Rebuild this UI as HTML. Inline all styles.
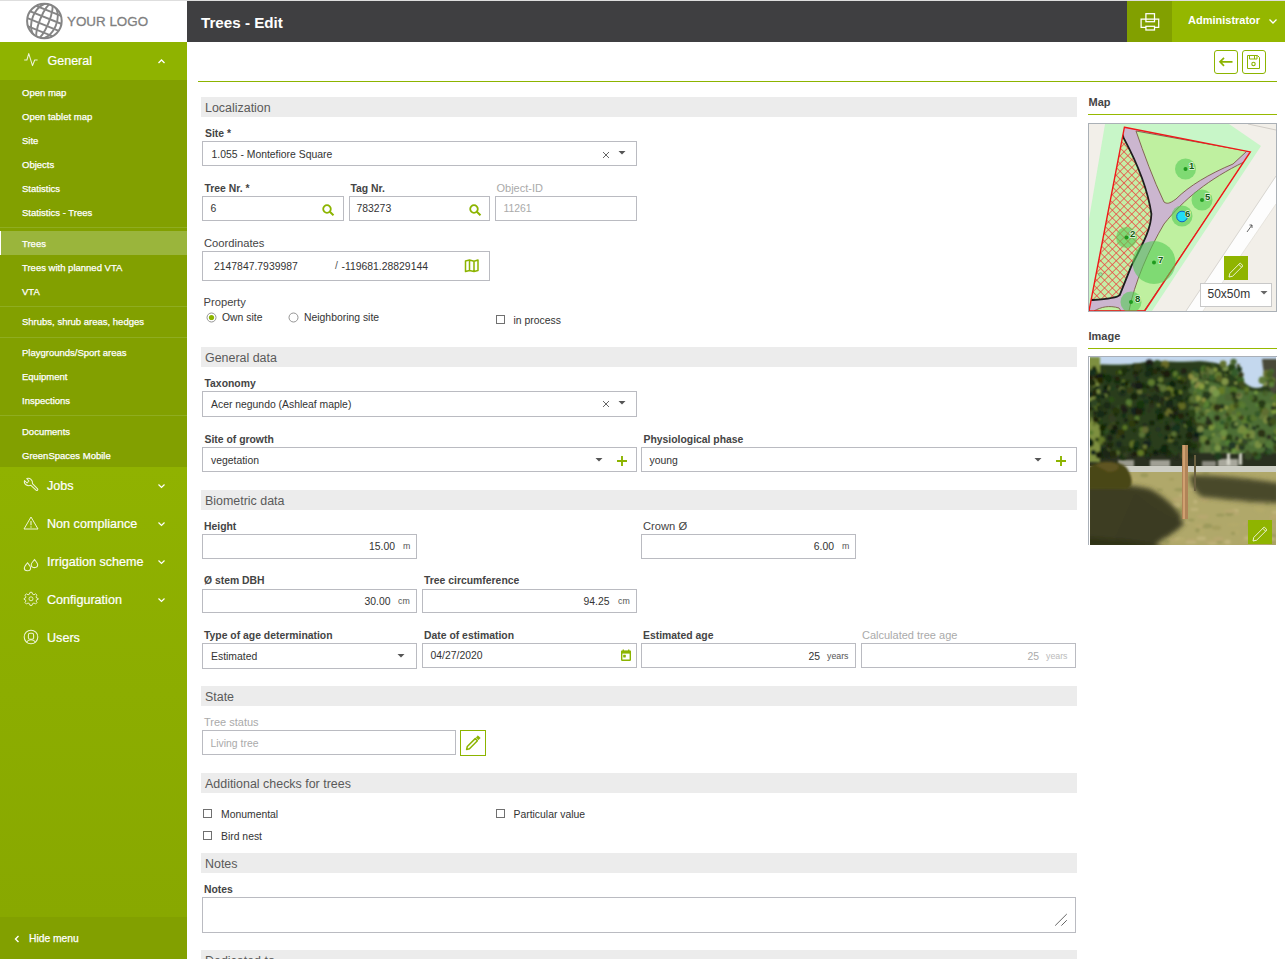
<!DOCTYPE html><html><head><meta charset="utf-8"><style>
html,body{margin:0;padding:0;}
body{width:1285px;height:959px;overflow:hidden;position:relative;background:#fff;font-family:"Liberation Sans", sans-serif;}
.t{position:absolute;white-space:nowrap;line-height:1;font-family:"Liberation Sans", sans-serif;}
.r{position:absolute;}
svg{position:absolute;}
</style></head><body>
<div class="r" style="left:0px;top:0px;width:1285px;height:1px;background:#dedede;"></div>
<div class="r" style="left:0px;top:1px;width:187px;height:41px;background:#fff;"></div>
<svg style="left:25px;top:2px" width="39" height="39" viewBox="0 0 39 39">
<defs><clipPath id="gc"><circle cx="19.4" cy="19" r="17.6"/></clipPath></defs>
<circle cx="19.4" cy="19" r="17.3" fill="none" stroke="#858585" stroke-width="2"/>
<g clip-path="url(#gc)" stroke="#858585" stroke-width="1.9" fill="none" transform="rotate(22 19.4 19)">
<ellipse cx="19.4" cy="19" rx="4.6" ry="18.5"/>
<ellipse cx="19.4" cy="19" rx="12.3" ry="18.5"/>
<line x1="0" y1="8" x2="39" y2="8"/>
<line x1="0" y1="15.3" x2="39" y2="15.3"/>
<line x1="0" y1="22.7" x2="39" y2="22.7"/>
<line x1="0" y1="30" x2="39" y2="30"/>
</g></svg>
<div class="t" style="left:67px;top:15px;font-size:13.4px;font-weight:400;color:#7f7f7f;-webkit-text-stroke:0.3px #7f7f7f;">YOUR LOGO</div>
<div class="r" style="left:0px;top:42px;width:187px;height:38px;background:#8fb300;"></div>
<div class="r" style="left:0px;top:80px;width:187px;height:387px;background:#82a000;"></div>
<div class="r" style="left:0px;top:467px;width:187px;height:450px;background:linear-gradient(#90b200,#88a800);"></div>
<div class="r" style="left:0px;top:917px;width:187px;height:42px;background:#82a000;"></div>
<svg style="left:20px;top:50px" width="20" height="20" viewBox="0 0 20 20"><polyline points="4.2,10 6.9,10 8.75,3.6 12.5,15.6 14.7,10 17.6,10" fill="none" stroke="#eef5d8" stroke-width="1.05" stroke-linejoin="round"/></svg>
<div class="t" style="left:47.5px;top:54.5px;font-size:12.5px;font-weight:400;color:#fff;-webkit-text-stroke:0.2px #fff;">General</div>
<svg style="left:157px;top:57px" width="9" height="8" viewBox="0 0 9 8"><polyline points="1.5,6 4.5,3 7.5,6" fill="none" stroke="#fff" stroke-width="1.3"/></svg>
<div class="r" style="left:0px;top:227px;width:187px;height:1px;background:#8fad20;"></div>
<div class="r" style="left:0px;top:306px;width:187px;height:1px;background:#8fad20;"></div>
<div class="r" style="left:0px;top:337px;width:187px;height:1px;background:#8fad20;"></div>
<div class="r" style="left:0px;top:415px;width:187px;height:1px;background:#8fad20;"></div>
<div class="r" style="left:0px;top:231px;width:187px;height:24px;background:#9ab53c;"></div>
<div class="r" style="left:0px;top:231px;width:1px;height:24px;background:#fff;"></div>
<div class="t" style="left:22px;top:88px;font-size:9.5px;font-weight:400;color:#fff;-webkit-text-stroke:0.25px #fff;">Open map</div>
<div class="t" style="left:22px;top:112px;font-size:9.5px;font-weight:400;color:#fff;-webkit-text-stroke:0.25px #fff;">Open tablet map</div>
<div class="t" style="left:22px;top:136px;font-size:9.5px;font-weight:400;color:#fff;-webkit-text-stroke:0.25px #fff;">Site</div>
<div class="t" style="left:22px;top:160px;font-size:9.5px;font-weight:400;color:#fff;-webkit-text-stroke:0.25px #fff;">Objects</div>
<div class="t" style="left:22px;top:184px;font-size:9.5px;font-weight:400;color:#fff;-webkit-text-stroke:0.25px #fff;">Statistics</div>
<div class="t" style="left:22px;top:208px;font-size:9.5px;font-weight:400;color:#fff;-webkit-text-stroke:0.25px #fff;">Statistics - Trees</div>
<div class="t" style="left:22px;top:239px;font-size:9.5px;font-weight:400;color:#fff;-webkit-text-stroke:0.25px #fff;">Trees</div>
<div class="t" style="left:22px;top:263px;font-size:9.5px;font-weight:400;color:#fff;-webkit-text-stroke:0.25px #fff;">Trees with planned VTA</div>
<div class="t" style="left:22px;top:287px;font-size:9.5px;font-weight:400;color:#fff;-webkit-text-stroke:0.25px #fff;">VTA</div>
<div class="t" style="left:22px;top:317px;font-size:9.5px;font-weight:400;color:#fff;-webkit-text-stroke:0.25px #fff;">Shrubs, shrub areas, hedges</div>
<div class="t" style="left:22px;top:348px;font-size:9.5px;font-weight:400;color:#fff;-webkit-text-stroke:0.25px #fff;">Playgrounds/Sport areas</div>
<div class="t" style="left:22px;top:372px;font-size:9.5px;font-weight:400;color:#fff;-webkit-text-stroke:0.25px #fff;">Equipment</div>
<div class="t" style="left:22px;top:396px;font-size:9.5px;font-weight:400;color:#fff;-webkit-text-stroke:0.25px #fff;">Inspections</div>
<div class="t" style="left:22px;top:427px;font-size:9.5px;font-weight:400;color:#fff;-webkit-text-stroke:0.25px #fff;">Documents</div>
<div class="t" style="left:22px;top:451px;font-size:9.5px;font-weight:400;color:#fff;-webkit-text-stroke:0.25px #fff;">GreenSpaces Mobile</div>
<svg style="left:20px;top:474px" width="24" height="24" viewBox="0 0 24 24"><path d="M4.5,6.5 L7,9 L9,7 L6.8,4.6 C9.8,3.6 13,6 12.5,9.6 L17.6,14.8 C18.3,15.6 17.2,17 16.3,16.4 L10.9,11.3 C7.2,12.6 3.6,10.2 4.5,6.5 Z" fill="none" stroke="#eef5d8" stroke-width="1.05" stroke-linejoin="round"/></svg>
<div class="t" style="left:47px;top:480px;font-size:12.6px;font-weight:400;color:#fff;-webkit-text-stroke:0.2px #fff;">Jobs</div>
<svg style="left:157px;top:482px" width="9" height="8" viewBox="0 0 9 8"><polyline points="1.5,2.5 4.5,5.5 7.5,2.5" fill="none" stroke="#fff" stroke-width="1.2"/></svg>
<svg style="left:20px;top:512px" width="24" height="24" viewBox="0 0 24 24"><path d="M11,5 L18,17 L4,17 Z" fill="none" stroke="#eef5d8" stroke-width="1" stroke-linejoin="round"/><line x1="11" y1="9" x2="11" y2="13.2" stroke="#eef5d8" stroke-width="1.1"/><circle cx="11" cy="15" r="0.65" fill="#eef5d8"/></svg>
<div class="t" style="left:47px;top:518px;font-size:12.6px;font-weight:400;color:#fff;-webkit-text-stroke:0.2px #fff;">Non compliance</div>
<svg style="left:157px;top:520px" width="9" height="8" viewBox="0 0 9 8"><polyline points="1.5,2.5 4.5,5.5 7.5,2.5" fill="none" stroke="#fff" stroke-width="1.2"/></svg>
<svg style="left:20px;top:550px" width="24" height="24" viewBox="0 0 24 24"><path d="M7.5,12.8 C6.3,14.6 4.3,16.2 4.3,18 C4.3,19.8 5.8,20.8 7.4,20.8 C9.1,20.8 10.6,19.8 10.6,18 C10.6,16.2 8.8,14.6 7.5,12.8 Z" fill="none" stroke="#eef5d8" stroke-width="1.05"/><path d="M14.5,9.6 C13.3,11.4 11.2,13 11.2,14.8 C11.2,16.6 12.8,17.6 14.4,17.6 C16.1,17.6 17.7,16.6 17.7,14.8 C17.7,13 15.8,11.4 14.5,9.6 Z" fill="none" stroke="#eef5d8" stroke-width="1.05"/></svg>
<div class="t" style="left:47px;top:556px;font-size:12.6px;font-weight:400;color:#fff;-webkit-text-stroke:0.2px #fff;">Irrigation scheme</div>
<svg style="left:157px;top:558px" width="9" height="8" viewBox="0 0 9 8"><polyline points="1.5,2.5 4.5,5.5 7.5,2.5" fill="none" stroke="#fff" stroke-width="1.2"/></svg>
<svg style="left:20px;top:588px" width="24" height="24" viewBox="0 0 24 24"><circle cx="11" cy="10.8" r="2" fill="none" stroke="#eef5d8" stroke-width="0.9"/><path d="M10,4.3 L12,4.3 L12.6,6.2 L14,6.8 L15.6,5.8 L17,7.2 L16.1,8.8 L16.6,10 L18.2,10.5 L18.2,11.3 L16.6,11.8 L16.1,13 L17,14.6 L15.6,16 L14,15 L12.6,15.6 L12,17.4 L10,17.4 L9.4,15.6 L8,15 L6.4,16 L5,14.6 L5.9,13 L5.4,11.8 L4,11.3 L4,10.5 L5.4,10 L5.9,8.8 L5,7.2 L6.4,5.8 L8,6.8 L9.4,6.2 Z" fill="none" stroke="#eef5d8" stroke-width="0.9" stroke-linejoin="round"/></svg>
<div class="t" style="left:47px;top:594px;font-size:12.6px;font-weight:400;color:#fff;-webkit-text-stroke:0.2px #fff;">Configuration</div>
<svg style="left:157px;top:596px" width="9" height="8" viewBox="0 0 9 8"><polyline points="1.5,2.5 4.5,5.5 7.5,2.5" fill="none" stroke="#fff" stroke-width="1.2"/></svg>
<svg style="left:20px;top:626px" width="24" height="24" viewBox="0 0 24 24"><circle cx="11" cy="11" r="6.8" fill="none" stroke="#eef5d8" stroke-width="1.05"/><rect x="8.4" y="7.3" width="5.2" height="6" rx="1.6" fill="none" stroke="#eef5d8" stroke-width="1.05"/><path d="M6.3,16.2 C7.5,14.5 9,13.7 11,13.7 C13,13.7 14.5,14.5 15.7,16.2" fill="none" stroke="#eef5d8" stroke-width="1.05"/></svg>
<div class="t" style="left:47px;top:632px;font-size:12.6px;font-weight:400;color:#fff;-webkit-text-stroke:0.2px #fff;">Users</div>
<svg style="left:13px;top:934px" width="8" height="10" viewBox="0 0 8 10"><polyline points="5.5,2 2.5,5 5.5,8" fill="none" stroke="#fff" stroke-width="1.4"/></svg>
<div class="t" style="left:29px;top:934px;font-size:10.3px;font-weight:400;color:#fff;-webkit-text-stroke:0.25px #fff;">Hide menu</div>
<div class="r" style="left:187px;top:1px;width:940px;height:41px;background:#3f3f41;"></div>
<div class="t" style="left:201px;top:15px;font-size:15.2px;font-weight:700;color:#fff;">Trees - Edit</div>
<div class="r" style="left:1127px;top:1px;width:45px;height:41px;background:#82a000;"></div>
<div class="r" style="left:1172px;top:1px;width:113px;height:41px;background:#94b700;"></div>
<svg style="left:1140px;top:12px" width="20" height="20" viewBox="0 0 20 20">
<rect x="5.9" y="1.7" width="8.6" height="8" fill="none" stroke="#fff" stroke-width="1.25"/>
<path d="M5.9,15.4 L1.1,15.4 L1.1,7.2 L18.7,7.2 L18.7,15.4 L14.5,15.4" fill="none" stroke="#fff" stroke-width="1.25"/>
<rect x="5.9" y="14.3" width="8.6" height="3.7" fill="none" stroke="#fff" stroke-width="1.25"/>
</svg>
<div class="t" style="left:1188px;top:15px;font-size:11px;font-weight:700;color:#fff;">Administrator</div>
<svg style="left:1268px;top:17px" width="10" height="9" viewBox="0 0 10 9"><polyline points="1.5,2.5 5,6 8.5,2.5" fill="none" stroke="#fff" stroke-width="1.3"/></svg>
<div class="r" style="left:198px;top:81px;width:1079px;height:1px;background:#8cb400;"></div>
<div class="r" style="left:1214px;top:50px;width:24px;height:24px;border:1px solid #8cb400;box-sizing:border-box;border-radius:3px;"></div>
<div class="r" style="left:1242px;top:50px;width:24px;height:24px;border:1px solid #8cb400;box-sizing:border-box;border-radius:3px;"></div>
<svg style="left:1218px;top:54px" width="16" height="16" viewBox="0 0 16 16"><path d="M14.5,7.8 L2.5,7.8 M6,3.8 L2,7.8 L6,11.8" fill="none" stroke="#8cb400" stroke-width="1.7"/></svg>
<svg style="left:1246px;top:54px" width="16" height="17" viewBox="0 0 16 17"><path d="M1.5,1.5 L11.5,1.5 L13.5,3.5 L13.5,14.5 L1.5,14.5 Z" fill="none" stroke="#8cb400" stroke-width="1"/><path d="M3.5,1.5 L3.5,5 L11,5 L11,1.5 M8.5,1.5 L8.5,5" fill="none" stroke="#8cb400" stroke-width="1"/><circle cx="7.5" cy="10" r="1.7" fill="none" stroke="#8cb400" stroke-width="1.1"/></svg>
<div class="r" style="left:201px;top:97px;width:876px;height:20px;background:#ececec;"></div>
<div class="t" style="left:205px;top:102px;font-size:12.45px;font-weight:400;color:#5a5a5a;">Localization</div>
<div class="t" style="left:205px;top:128.5px;font-size:10.4px;font-weight:700;color:#444;">Site *</div>
<div class="r" style="left:202px;top:141px;width:435px;height:25px;background:#fff;border:1px solid #babbc1;box-sizing:border-box;"></div>
<div class="t" style="left:211.5px;top:150px;font-size:10.4px;font-weight:400;color:#333;">1.055 - Montefiore Square</div>
<svg style="left:602px;top:150.5px" width="8" height="8" viewBox="0 0 8 8"><path d="M1,1 L7,7 M7,1 L1,7" stroke="#666" stroke-width="1"/></svg>
<svg style="left:618px;top:150.5px" width="8" height="4" viewBox="0 0 8 4"><path d="M0.5,0 L7.5,0 L4,3.5 Z" fill="#555"/></svg>
<div class="t" style="left:204.5px;top:184px;font-size:10.4px;font-weight:700;color:#444;">Tree Nr. *</div>
<div class="r" style="left:202px;top:196px;width:142px;height:25px;background:#fff;border:1px solid #babbc1;box-sizing:border-box;"></div>
<div class="t" style="left:210.5px;top:204px;font-size:10.4px;font-weight:400;color:#333;">6</div>
<svg style="left:322px;top:203.5px" width="13" height="12" viewBox="0 0 13 12"><circle cx="5" cy="5" r="3.8" fill="none" stroke="#8cb400" stroke-width="1.8"/><path d="M7.8,7.8 L11.5,11.3" stroke="#8cb400" stroke-width="2"/></svg>
<div class="t" style="left:350.5px;top:184px;font-size:10.4px;font-weight:700;color:#444;">Tag Nr.</div>
<div class="r" style="left:349px;top:196px;width:141px;height:25px;background:#fff;border:1px solid #babbc1;box-sizing:border-box;"></div>
<div class="t" style="left:356.5px;top:204px;font-size:10.4px;font-weight:400;color:#333;">783273</div>
<svg style="left:469px;top:203.5px" width="13" height="12" viewBox="0 0 13 12"><circle cx="5" cy="5" r="3.8" fill="none" stroke="#8cb400" stroke-width="1.8"/><path d="M7.8,7.8 L11.5,11.3" stroke="#8cb400" stroke-width="2"/></svg>
<div class="t" style="left:496.5px;top:183px;font-size:11px;font-weight:400;color:#aaa;">Object-ID</div>
<div class="r" style="left:495px;top:196px;width:142px;height:25px;background:#fff;border:1px solid #babbc1;box-sizing:border-box;"></div>
<div class="t" style="left:503.5px;top:204px;font-size:10.4px;font-weight:400;color:#aaa;">11261</div>
<div class="t" style="left:204px;top:238px;font-size:11.2px;font-weight:400;color:#444;">Coordinates</div>
<div class="r" style="left:202px;top:251px;width:288px;height:30px;background:#fff;border:1px solid #babbc1;box-sizing:border-box;"></div>
<div class="t" style="left:214px;top:262px;font-size:10.4px;font-weight:400;color:#333;">2147847.7939987</div>
<div class="t" style="left:335px;top:261px;font-size:10.4px;font-weight:400;color:#555;">/</div>
<div class="t" style="left:341.5px;top:262px;font-size:10.4px;font-weight:400;color:#333;">-119681.28829144</div>
<svg style="left:464px;top:258px" width="15" height="15" viewBox="0 0 15 15"><path d="M1.5,3 L5.5,2 L10,3.2 L14,2 L14,12.5 L10,13.5 L5.5,12.5 L1.5,13.5 Z M5.5,2 L5.5,12.5 M10,3.2 L10,13.5" fill="none" stroke="#8cb400" stroke-width="1.5" stroke-linejoin="round"/></svg>
<div class="t" style="left:203.5px;top:297px;font-size:11.2px;font-weight:400;color:#444;">Property</div>
<svg style="left:206px;top:312px" width="11" height="11" viewBox="0 0 11 11"><circle cx="5.5" cy="5.5" r="4.5" fill="#fff" stroke="#888" stroke-width="0.9"/><circle cx="5.5" cy="5.5" r="2.6" fill="#8cb400"/></svg>
<div class="t" style="left:222px;top:313px;font-size:10.4px;font-weight:400;color:#333;">Own site</div>
<svg style="left:288px;top:312px" width="11" height="11" viewBox="0 0 11 11"><circle cx="5.5" cy="5.5" r="4.5" fill="#fff" stroke="#888" stroke-width="0.9"/></svg>
<div class="t" style="left:304px;top:313px;font-size:10.4px;font-weight:400;color:#333;">Neighboring site</div>
<div class="r" style="left:496px;top:315px;width:9px;height:9px;background:#fff;border:1px solid #707070;box-sizing:border-box;"></div>
<div class="t" style="left:513.5px;top:316px;font-size:10.4px;font-weight:400;color:#333;">in process</div>
<div class="r" style="left:201px;top:347px;width:876px;height:20px;background:#ececec;"></div>
<div class="t" style="left:205px;top:352px;font-size:12.45px;font-weight:400;color:#5a5a5a;">General data</div>
<div class="t" style="left:204.5px;top:378.5px;font-size:10.4px;font-weight:700;color:#444;">Taxonomy</div>
<div class="r" style="left:202px;top:391px;width:435px;height:26px;background:#fff;border:1px solid #babbc1;box-sizing:border-box;"></div>
<div class="t" style="left:211px;top:400px;font-size:10.4px;font-weight:400;color:#333;">Acer negundo (Ashleaf maple)</div>
<svg style="left:602px;top:400px" width="8" height="8" viewBox="0 0 8 8"><path d="M1,1 L7,7 M7,1 L1,7" stroke="#666" stroke-width="1"/></svg>
<svg style="left:618px;top:400.5px" width="8" height="4" viewBox="0 0 8 4"><path d="M0.5,0 L7.5,0 L4,3.5 Z" fill="#555"/></svg>
<div class="t" style="left:204.5px;top:435px;font-size:10.4px;font-weight:700;color:#444;">Site of growth</div>
<div class="r" style="left:202px;top:447px;width:435px;height:25px;background:#fff;border:1px solid #babbc1;box-sizing:border-box;"></div>
<div class="t" style="left:211px;top:456px;font-size:10.4px;font-weight:400;color:#333;">vegetation</div>
<svg style="left:594.5px;top:457.5px" width="8" height="4" viewBox="0 0 8 4"><path d="M0.5,0 L7.5,0 L4,3.5 Z" fill="#555"/></svg>
<svg style="left:616.5px;top:456px" width="10" height="10" viewBox="0 0 10 10"><path d="M5,0 L5,10 M0,5 L10,5" stroke="#8cb400" stroke-width="1.9"/></svg>
<div class="t" style="left:643.5px;top:435px;font-size:10.4px;font-weight:700;color:#444;">Physiological phase</div>
<div class="r" style="left:641px;top:447px;width:436px;height:25px;background:#fff;border:1px solid #babbc1;box-sizing:border-box;"></div>
<div class="t" style="left:649.5px;top:456px;font-size:10.4px;font-weight:400;color:#333;">young</div>
<svg style="left:1033.5px;top:457.5px" width="8" height="4" viewBox="0 0 8 4"><path d="M0.5,0 L7.5,0 L4,3.5 Z" fill="#555"/></svg>
<svg style="left:1055.5px;top:456px" width="10" height="10" viewBox="0 0 10 10"><path d="M5,0 L5,10 M0,5 L10,5" stroke="#8cb400" stroke-width="1.9"/></svg>
<div class="r" style="left:201px;top:490px;width:876px;height:20px;background:#ececec;"></div>
<div class="t" style="left:205px;top:495px;font-size:12.45px;font-weight:400;color:#5a5a5a;">Biometric data</div>
<div class="t" style="left:204px;top:522px;font-size:10.4px;font-weight:700;color:#444;">Height</div>
<div class="r" style="left:202px;top:534px;width:215px;height:25px;background:#fff;border:1px solid #babbc1;box-sizing:border-box;"></div>
<div class="t" style="right:890px;top:542px;font-size:10.4px;font-weight:400;color:#333;text-align:right;">15.00</div>
<div class="t" style="left:403px;top:542px;font-size:8.8px;font-weight:400;color:#555;">m</div>
<div class="t" style="left:643px;top:521px;font-size:11.2px;font-weight:400;color:#444;">Crown &Oslash;</div>
<div class="r" style="left:641px;top:534px;width:215px;height:25px;background:#fff;border:1px solid #babbc1;box-sizing:border-box;"></div>
<div class="t" style="right:451px;top:542px;font-size:10.4px;font-weight:400;color:#333;text-align:right;">6.00</div>
<div class="t" style="left:842px;top:542px;font-size:8.8px;font-weight:400;color:#555;">m</div>
<div class="t" style="left:204px;top:576px;font-size:10.4px;font-weight:700;color:#444;">&Oslash; stem DBH</div>
<div class="r" style="left:202px;top:589px;width:215px;height:24px;background:#fff;border:1px solid #babbc1;box-sizing:border-box;"></div>
<div class="t" style="right:894.5px;top:597px;font-size:10.4px;font-weight:400;color:#333;text-align:right;">30.00</div>
<div class="t" style="left:398px;top:597px;font-size:8.8px;font-weight:400;color:#555;">cm</div>
<div class="t" style="left:424px;top:576px;font-size:10.4px;font-weight:700;color:#444;">Tree circumference</div>
<div class="r" style="left:422px;top:589px;width:215px;height:24px;background:#fff;border:1px solid #babbc1;box-sizing:border-box;"></div>
<div class="t" style="right:675.5px;top:597px;font-size:10.4px;font-weight:400;color:#333;text-align:right;">94.25</div>
<div class="t" style="left:618px;top:597px;font-size:8.8px;font-weight:400;color:#555;">cm</div>
<div class="t" style="left:204px;top:631px;font-size:10.4px;font-weight:700;color:#444;">Type of age determination</div>
<div class="r" style="left:202px;top:643px;width:215px;height:26px;background:#fff;border:1px solid #babbc1;box-sizing:border-box;"></div>
<div class="t" style="left:211px;top:652px;font-size:10.4px;font-weight:400;color:#333;">Estimated</div>
<svg style="left:397px;top:654px" width="8" height="4" viewBox="0 0 8 4"><path d="M0.5,0 L7.5,0 L4,3.5 Z" fill="#555"/></svg>
<div class="t" style="left:424px;top:631px;font-size:10.4px;font-weight:700;color:#444;">Date of estimation</div>
<div class="r" style="left:422px;top:643px;width:215px;height:25px;background:#fff;border:1px solid #babbc1;box-sizing:border-box;"></div>
<div class="t" style="left:430.5px;top:651px;font-size:10.4px;font-weight:400;color:#333;">04/27/2020</div>
<svg style="left:620px;top:649px" width="12" height="13" viewBox="0 0 12 13"><rect x="1.7" y="2.3" width="8.6" height="9" fill="none" stroke="#8cb400" stroke-width="1.4" rx="0.5"/><rect x="1.2" y="1.8" width="9.6" height="2.8" fill="#8cb400"/><path d="M3.3,0.6 L3.3,2.5 M8.7,0.6 L8.7,2.5" stroke="#8cb400" stroke-width="1.3"/><rect x="3.2" y="5.8" width="2.6" height="2.6" rx="0.4" fill="#8cb400"/></svg>
<div class="t" style="left:643px;top:631px;font-size:10.4px;font-weight:700;color:#444;">Estimated age</div>
<div class="r" style="left:641px;top:643px;width:215px;height:25px;background:#fff;border:1px solid #babbc1;box-sizing:border-box;"></div>
<div class="t" style="right:465px;top:652px;font-size:10.4px;font-weight:400;color:#333;text-align:right;">25</div>
<div class="t" style="left:827px;top:652px;font-size:8.8px;font-weight:400;color:#555;">years</div>
<div class="t" style="left:862px;top:630px;font-size:11px;font-weight:400;color:#aaa;">Calculated tree age</div>
<div class="r" style="left:861px;top:643px;width:215px;height:25px;background:#fff;border:1px solid #babbc1;box-sizing:border-box;"></div>
<div class="t" style="right:246px;top:652px;font-size:10.4px;font-weight:400;color:#aaa;text-align:right;">25</div>
<div class="t" style="left:1046px;top:652px;font-size:8.8px;font-weight:400;color:#bbb;">years</div>
<div class="r" style="left:201px;top:686px;width:876px;height:20px;background:#ececec;"></div>
<div class="t" style="left:205px;top:691px;font-size:12.45px;font-weight:400;color:#5a5a5a;">State</div>
<div class="t" style="left:204px;top:717px;font-size:11px;font-weight:400;color:#aaa;">Tree status</div>
<div class="r" style="left:202px;top:730px;width:254px;height:25px;background:#fff;border:1px solid #babbc1;box-sizing:border-box;"></div>
<div class="t" style="left:210.5px;top:739px;font-size:10.4px;font-weight:400;color:#aaa;">Living tree</div>
<div class="r" style="left:460px;top:730px;width:26px;height:26px;background:#fff;border:1px solid #8cb400;box-sizing:border-box;"></div>
<svg style="left:464px;top:734px" width="18" height="18" viewBox="0 0 18 18"><path d="M2.6,15.4 L3.3,12.5 L11.2,4.6 L13.4,6.8 L5.5,14.7 Z" fill="none" stroke="#8cb400" stroke-width="1.5" stroke-linejoin="round"/><path d="M12.2,3.6 L14.0,1.8 L16.2,4.0 L14.4,5.8 Z" fill="#8cb400" stroke="#8cb400" stroke-width="0.8" stroke-linejoin="round"/></svg>
<div class="r" style="left:201px;top:773px;width:876px;height:20px;background:#ececec;"></div>
<div class="t" style="left:205px;top:778px;font-size:12.45px;font-weight:400;color:#5a5a5a;">Additional checks for trees</div>
<div class="r" style="left:203px;top:809px;width:9px;height:9px;background:#fff;border:1px solid #707070;box-sizing:border-box;"></div>
<div class="t" style="left:221px;top:810px;font-size:10.4px;font-weight:400;color:#333;">Monumental</div>
<div class="r" style="left:496px;top:809px;width:9px;height:9px;background:#fff;border:1px solid #707070;box-sizing:border-box;"></div>
<div class="t" style="left:513.5px;top:810px;font-size:10.4px;font-weight:400;color:#333;">Particular value</div>
<div class="r" style="left:203px;top:831px;width:9px;height:9px;background:#fff;border:1px solid #707070;box-sizing:border-box;"></div>
<div class="t" style="left:221px;top:832px;font-size:10.4px;font-weight:400;color:#333;">Bird nest</div>
<div class="r" style="left:201px;top:853px;width:876px;height:20px;background:#ececec;"></div>
<div class="t" style="left:205px;top:858px;font-size:12.45px;font-weight:400;color:#5a5a5a;">Notes</div>
<div class="t" style="left:204px;top:885px;font-size:10.4px;font-weight:700;color:#444;">Notes</div>
<div class="r" style="left:202px;top:897px;width:874px;height:36px;background:#fff;border:1px solid #babbc1;box-sizing:border-box;"></div>
<svg style="left:1054px;top:913px" width="14" height="14" viewBox="0 0 14 14"><path d="M1.2,12.6 L12.8,1 M7.4,12.6 L12.8,7.2" stroke="#666" stroke-width="1"/></svg>
<div class="r" style="left:201px;top:950px;width:876px;height:20px;background:#ececec;"></div>
<div class="t" style="left:205px;top:955px;font-size:12.45px;font-weight:400;color:#5a5a5a;">Dedicated to</div>
<div class="t" style="left:1088.5px;top:97px;font-size:11px;font-weight:700;color:#444;">Map</div>
<div class="r" style="left:1088px;top:114px;width:189px;height:1px;background:#96b900;"></div>
<div class="r" style="left:1088px;top:123px;width:189px;height:189px;background:#f1eee8;border:1px solid #aab0b6;box-sizing:border-box;"></div>
<svg style="left:1089px;top:124px" width="187" height="187" viewBox="0 0 187 187">
<defs>
<pattern id="hatch" width="5.5" height="5.5" patternUnits="userSpaceOnUse" patternTransform="rotate(45)">
<rect width="5.5" height="5.5" fill="#c4eea6"/>
<path d="M0,0 L0,5.5 M0,0 L5.5,0" stroke="#ec3c3c" stroke-width="1.3"/>
</pattern>
<clipPath id="tri"><polygon points="35.4,3.2 161.3,27.9 55.7,187 0,187"/></clipPath>
</defs>
<rect width="187" height="187" fill="#f2efe9"/>
<path d="M159,0 L187,6" stroke="#d0ccc6" stroke-width="1"/>
<polygon points="16,0 140,0 172,22 63,187 0,187 0,95" fill="#c8f6c8"/>
<polygon points="97,187 187,52 187,80 114,187" fill="#fdfdfd"/>
<path d="M97,187 L187,52" stroke="#d4d0cc" stroke-width="0.9"/>
<path d="M114,187 L187,80" stroke="#e0dcd6" stroke-width="0.7"/>
<path d="M158,108 L163,101 M160.5,101 L163,101 L163,104" stroke="#555" stroke-width="0.9" fill="none"/>
<g clip-path="url(#tri)">
<rect width="187" height="187" fill="#cbb6cf"/>
<path d="M47,7 L158,27 L144,40 C120,50 100,62 87,75 C80,80 78,80 75,78 C64,55 55,30 47,7 Z" fill="#bff0a0" stroke="#7a5a48" stroke-width="0.9"/>
<path d="M155,38 L55,187 L40,187 C45,160 60,125 75,100 C95,75 120,55 155,38 Z" fill="#bff0a0" stroke="#7a5a48" stroke-width="0.9"/>
<path d="M34.6,13.9 C46,35 58,60 62.4,90 C62,104 56,116 42.6,141.5 L30.7,171.2 C28,174 20,175 4,176 L0,176 L0,187 L-5,187 L30,0 Z" fill="url(#hatch)" stroke="#1e1e1e" stroke-width="1.8"/>
<path d="M5,187 C12,183 20,181 30,184 L32,187 Z" fill="#bff0a0" stroke="#7a5a48" stroke-width="0.9"/>
</g>
<polygon points="35.4,3.2 161.3,27.9 55.7,187 0,187" fill="none" stroke="#f01818" stroke-width="1.4"/>
<g fill="#55cc55" fill-opacity="0.6">
<circle cx="96.5" cy="45" r="10.5"/>
<circle cx="113" cy="76" r="10.5"/>
<circle cx="93" cy="92" r="10.5"/>
<circle cx="37.5" cy="113.5" r="10.5"/>
<circle cx="65" cy="138.5" r="21.5"/>
<circle cx="42" cy="178" r="10.5"/>
</g>
<g fill="#1f9a1f">
<circle cx="96.5" cy="45" r="2"/><circle cx="113" cy="76" r="2"/><circle cx="37.5" cy="113.5" r="2"/>
<circle cx="65" cy="138.5" r="2"/><circle cx="42" cy="178" r="2"/>
</g>
<circle cx="11.5" cy="150.5" r="1.8" fill="#9fe09f" stroke="#6a8a5a" stroke-width="0.6"/>
<circle cx="93" cy="92.5" r="5.3" fill="#22ddf5" stroke="#1060c0" stroke-width="1"/>
<g font-family="Liberation Sans" font-size="9.5" font-weight="700" fill="#0f5a0f" stroke="#ffffff" stroke-width="1.3" stroke-opacity="0.85" paint-order="stroke">
<text x="100" y="45">1</text><text x="116" y="76">5</text><text x="96" y="93">6</text>
<text x="41" y="113">2</text><text x="69" y="139">7</text><text x="46" y="178">8</text>
</g>
</svg>
<div class="r" style="left:1224px;top:256px;width:24px;height:24px;background:#8fb400;"></div>
<svg style="left:1224px;top:256px" width="24" height="24" viewBox="0 0 24 24"><path d="M5,21 L5.8,17.4 L16.2,7 L19,9.8 L8.6,20.2 Z M14.8,8.4 L17.6,11.2" fill="none" stroke="#f4f8e8" stroke-width="0.9"/></svg>
<div class="r" style="left:1200px;top:283px;width:72px;height:24px;background:#fff;border:1px solid #c8c8c8;box-sizing:border-box;"></div>
<div class="t" style="left:1207.5px;top:288px;font-size:12px;font-weight:400;color:#333;">50x50m</div>
<svg style="left:1260px;top:291px" width="8" height="4" viewBox="0 0 8 4"><path d="M0.5,0 L7.5,0 L4,3.5 Z" fill="#666"/></svg>
<div class="t" style="left:1088.5px;top:331px;font-size:11px;font-weight:700;color:#444;">Image</div>
<div class="r" style="left:1088px;top:348px;width:189px;height:1px;background:#96b900;"></div>
<div class="r" style="left:1088px;top:356px;width:1px;height:189px;background:#aab0b8;"></div>
<div class="r" style="left:1088px;top:356px;width:189px;height:1px;background:#aab0b8;"></div>
<svg style="left:1090px;top:357px" width="186" height="188" viewBox="0 0 186 188">
<defs>
<filter id="bl" x="-10%" y="-10%" width="120%" height="120%"><feGaussianBlur stdDeviation="1.1"/></filter>
<filter id="bl2" x="-20%" y="-20%" width="140%" height="140%"><feGaussianBlur stdDeviation="2.5"/></filter>
</defs>
<rect width="186" height="188" fill="#c4d8ee"/>
<rect y="95" width="186" height="93" fill="#b0a86a"/>
<g filter="url(#bl)"><ellipse cx="181.3" cy="179.3" rx="5.4" ry="2.4" fill="#9c9a5c"/><ellipse cx="173.0" cy="145.7" rx="3.8" ry="1.0" fill="#b8a870"/><ellipse cx="105.4" cy="144.8" rx="2.0" ry="2.1" fill="#c0b47a"/><ellipse cx="13.8" cy="146.4" rx="4.9" ry="1.1" fill="#9c9a5c"/><ellipse cx="15.0" cy="183.3" rx="2.9" ry="1.9" fill="#c0b47a"/><ellipse cx="76.9" cy="184.8" rx="3.0" ry="1.8" fill="#9c9a5c"/><ellipse cx="158.6" cy="139.9" rx="3.0" ry="1.8" fill="#c0b47a"/><ellipse cx="124.6" cy="183.7" rx="5.3" ry="1.9" fill="#b4aa6a"/><ellipse cx="145.1" cy="175.2" rx="4.5" ry="1.9" fill="#b4aa6a"/><ellipse cx="70.0" cy="132.8" rx="3.1" ry="1.2" fill="#9c9a5c"/><ellipse cx="4.9" cy="153.8" rx="4.7" ry="2.4" fill="#a59e5e"/><ellipse cx="90.2" cy="154.4" rx="2.6" ry="1.7" fill="#9c9a5c"/><ellipse cx="95.8" cy="165.6" rx="3.5" ry="1.0" fill="#c0b47a"/><ellipse cx="152.7" cy="144.0" rx="4.6" ry="1.8" fill="#b4aa6a"/><ellipse cx="162.4" cy="167.2" rx="5.7" ry="2.4" fill="#9c9a5c"/><ellipse cx="186.0" cy="155.2" rx="4.4" ry="1.7" fill="#c0b47a"/><ellipse cx="32.0" cy="162.2" rx="6.0" ry="1.8" fill="#9c9a5c"/><ellipse cx="1.4" cy="157.1" rx="3.9" ry="1.4" fill="#9c9a5c"/><ellipse cx="145.4" cy="153.5" rx="3.4" ry="1.7" fill="#c0b47a"/><ellipse cx="68.0" cy="166.5" rx="5.8" ry="2.3" fill="#9c9a5c"/><ellipse cx="101.2" cy="183.8" rx="5.2" ry="2.3" fill="#b8a870"/><ellipse cx="107.5" cy="173.3" rx="2.4" ry="2.4" fill="#9c9a5c"/><ellipse cx="83.6" cy="164.6" rx="4.0" ry="1.3" fill="#9c9a5c"/><ellipse cx="155.7" cy="166.7" rx="2.7" ry="1.7" fill="#b8a870"/><ellipse cx="185.0" cy="159.9" rx="5.1" ry="2.5" fill="#b8a870"/><ellipse cx="72.1" cy="144.5" rx="2.1" ry="1.7" fill="#9c9a5c"/><ellipse cx="50.5" cy="156.1" rx="5.4" ry="1.8" fill="#a59e5e"/><ellipse cx="128.7" cy="121.7" rx="5.7" ry="1.9" fill="#b4aa6a"/><ellipse cx="91.2" cy="152.8" rx="5.6" ry="1.5" fill="#9c9a5c"/><ellipse cx="169.7" cy="151.9" rx="5.4" ry="2.1" fill="#b4aa6a"/><ellipse cx="72.6" cy="183.7" rx="5.8" ry="1.3" fill="#9c9a5c"/><ellipse cx="94.5" cy="149.1" rx="3.8" ry="1.7" fill="#a59e5e"/><ellipse cx="162.1" cy="138.8" rx="4.7" ry="1.4" fill="#b4aa6a"/><ellipse cx="177.0" cy="146.5" rx="2.6" ry="1.2" fill="#9c9a5c"/><ellipse cx="101.0" cy="185.4" rx="5.8" ry="1.4" fill="#c0b47a"/><ellipse cx="15.9" cy="165.4" rx="2.5" ry="2.1" fill="#b4aa6a"/><ellipse cx="32.6" cy="173.4" rx="2.7" ry="2.1" fill="#b8a870"/><ellipse cx="183.7" cy="168.5" rx="2.4" ry="1.1" fill="#b8a870"/><ellipse cx="76.9" cy="177.4" rx="3.0" ry="2.2" fill="#a59e5e"/><ellipse cx="160.6" cy="143.7" rx="3.6" ry="1.7" fill="#a59e5e"/><ellipse cx="154.9" cy="183.5" rx="5.0" ry="1.6" fill="#b4aa6a"/><ellipse cx="41.5" cy="147.6" rx="2.3" ry="2.3" fill="#a59e5e"/><ellipse cx="180.5" cy="181.4" rx="5.3" ry="1.9" fill="#b8a870"/><ellipse cx="139.4" cy="156.7" rx="4.0" ry="2.5" fill="#9c9a5c"/><ellipse cx="85.9" cy="148.1" rx="4.4" ry="2.4" fill="#c0b47a"/><ellipse cx="50.5" cy="180.5" rx="5.1" ry="1.4" fill="#c0b47a"/><ellipse cx="86.1" cy="182.8" rx="5.8" ry="1.8" fill="#b8a870"/><ellipse cx="40.8" cy="187.3" rx="5.8" ry="2.3" fill="#9c9a5c"/><ellipse cx="180.6" cy="181.9" rx="4.2" ry="1.5" fill="#c0b47a"/><ellipse cx="10.3" cy="172.7" rx="5.1" ry="1.1" fill="#a59e5e"/><ellipse cx="52.3" cy="149.3" rx="3.9" ry="2.3" fill="#c0b47a"/><ellipse cx="117.3" cy="141.9" rx="2.2" ry="1.0" fill="#9c9a5c"/><ellipse cx="112.7" cy="159.5" rx="6.0" ry="1.7" fill="#b8a870"/><ellipse cx="81.6" cy="122.2" rx="2.9" ry="1.2" fill="#a59e5e"/><ellipse cx="89.9" cy="142.4" rx="6.0" ry="2.5" fill="#b8a870"/><ellipse cx="35.8" cy="147.3" rx="5.0" ry="1.3" fill="#c0b47a"/><ellipse cx="110.6" cy="169.0" rx="4.4" ry="2.1" fill="#b8a870"/><ellipse cx="55.8" cy="139.0" rx="3.1" ry="1.9" fill="#b4aa6a"/><ellipse cx="23.9" cy="128.7" rx="4.7" ry="2.4" fill="#b4aa6a"/><ellipse cx="141.6" cy="154.2" rx="4.0" ry="1.6" fill="#b8a870"/><ellipse cx="184.2" cy="133.4" rx="5.5" ry="1.4" fill="#9c9a5c"/><ellipse cx="1.5" cy="186.6" rx="4.2" ry="1.3" fill="#9c9a5c"/><ellipse cx="157.6" cy="181.0" rx="3.9" ry="2.0" fill="#c0b47a"/><ellipse cx="4.5" cy="182.0" rx="2.4" ry="1.9" fill="#c0b47a"/><ellipse cx="117.0" cy="169.0" rx="5.2" ry="2.4" fill="#9c9a5c"/><ellipse cx="170.4" cy="154.2" rx="3.2" ry="1.2" fill="#b4aa6a"/><ellipse cx="13.5" cy="131.5" rx="4.3" ry="1.3" fill="#9c9a5c"/><ellipse cx="26.6" cy="121.9" rx="3.6" ry="2.1" fill="#9c9a5c"/><ellipse cx="114.5" cy="144.8" rx="2.5" ry="1.2" fill="#b4aa6a"/><ellipse cx="171.7" cy="131.8" rx="4.3" ry="1.3" fill="#b8a870"/><ellipse cx="27.6" cy="172.7" rx="4.8" ry="1.6" fill="#b8a870"/><ellipse cx="111.8" cy="175.0" rx="2.3" ry="1.9" fill="#b4aa6a"/><ellipse cx="10.8" cy="158.3" rx="2.8" ry="1.7" fill="#9c9a5c"/><ellipse cx="2.7" cy="153.0" rx="3.3" ry="1.6" fill="#b4aa6a"/><ellipse cx="130.3" cy="158.1" rx="4.3" ry="1.5" fill="#9c9a5c"/><ellipse cx="130.7" cy="119.8" rx="3.8" ry="1.3" fill="#b8a870"/><ellipse cx="54.1" cy="161.2" rx="4.6" ry="1.6" fill="#b4aa6a"/><ellipse cx="129.5" cy="184.4" rx="2.7" ry="1.9" fill="#9c9a5c"/><ellipse cx="89.9" cy="182.0" rx="4.6" ry="1.2" fill="#c0b47a"/><ellipse cx="40.8" cy="159.5" rx="4.4" ry="1.8" fill="#a59e5e"/><ellipse cx="24.7" cy="137.7" rx="5.2" ry="2.0" fill="#a59e5e"/><ellipse cx="104.4" cy="152.4" rx="4.2" ry="1.4" fill="#c0b47a"/><ellipse cx="44.4" cy="122.1" rx="3.1" ry="1.7" fill="#b4aa6a"/><ellipse cx="120.3" cy="126.5" rx="2.6" ry="2.4" fill="#c0b47a"/><ellipse cx="116.1" cy="116.4" rx="3.7" ry="1.3" fill="#9c9a5c"/><ellipse cx="143.1" cy="176.3" rx="2.1" ry="1.7" fill="#9c9a5c"/><ellipse cx="89.6" cy="132.7" rx="5.5" ry="1.7" fill="#9c9a5c"/><ellipse cx="149.1" cy="141.4" rx="5.1" ry="1.5" fill="#c0b47a"/><ellipse cx="137.7" cy="141.3" rx="5.3" ry="1.6" fill="#a59e5e"/><ellipse cx="54.3" cy="118.2" rx="4.0" ry="2.2" fill="#9c9a5c"/><ellipse cx="111.3" cy="181.4" rx="4.8" ry="2.1" fill="#c0b47a"/><ellipse cx="128.5" cy="182.1" rx="5.2" ry="2.4" fill="#b8a870"/><ellipse cx="84.9" cy="142.4" rx="3.2" ry="1.3" fill="#b8a870"/><ellipse cx="93.2" cy="138.4" rx="4.5" ry="1.0" fill="#c0b47a"/><ellipse cx="38.9" cy="160.6" rx="4.0" ry="2.1" fill="#9c9a5c"/><ellipse cx="64.4" cy="183.0" rx="5.9" ry="1.1" fill="#9c9a5c"/><ellipse cx="114.6" cy="160.2" rx="2.6" ry="1.9" fill="#b8a870"/><ellipse cx="48.7" cy="165.8" rx="3.0" ry="2.3" fill="#9c9a5c"/><ellipse cx="87.9" cy="184.2" rx="5.9" ry="1.1" fill="#b4aa6a"/><ellipse cx="70.2" cy="158.6" rx="4.4" ry="2.3" fill="#a59e5e"/><ellipse cx="30.3" cy="131.9" rx="2.3" ry="1.1" fill="#b4aa6a"/><ellipse cx="24.2" cy="117.9" rx="3.2" ry="1.5" fill="#9c9a5c"/><ellipse cx="168.4" cy="173.0" rx="2.4" ry="1.9" fill="#b8a870"/><ellipse cx="137.6" cy="184.9" rx="3.2" ry="2.4" fill="#c0b47a"/><ellipse cx="53.2" cy="164.9" rx="3.3" ry="1.2" fill="#b8a870"/><ellipse cx="16.1" cy="165.4" rx="2.5" ry="1.8" fill="#a59e5e"/><ellipse cx="182.3" cy="142.0" rx="4.6" ry="1.1" fill="#b8a870"/><ellipse cx="139.1" cy="154.3" rx="4.9" ry="1.5" fill="#b8a870"/><ellipse cx="91.5" cy="183.7" rx="4.0" ry="2.2" fill="#b4aa6a"/><ellipse cx="174.4" cy="177.5" rx="2.8" ry="1.7" fill="#b8a870"/><ellipse cx="146.8" cy="156.6" rx="2.2" ry="1.3" fill="#b8a870"/><ellipse cx="108.9" cy="168.2" rx="5.5" ry="1.1" fill="#b4aa6a"/><ellipse cx="33.9" cy="182.7" rx="2.7" ry="1.1" fill="#b8a870"/><ellipse cx="120.0" cy="184.7" rx="5.7" ry="1.2" fill="#b8a870"/><ellipse cx="114.5" cy="142.3" rx="5.4" ry="2.3" fill="#b8a870"/><ellipse cx="28.9" cy="164.8" rx="3.8" ry="1.1" fill="#a59e5e"/><ellipse cx="104.2" cy="132.1" rx="4.6" ry="1.6" fill="#c0b47a"/><ellipse cx="107.1" cy="124.3" rx="4.1" ry="1.1" fill="#a59e5e"/><ellipse cx="143.6" cy="167.6" rx="6.0" ry="1.6" fill="#b4aa6a"/><ellipse cx="14.2" cy="154.0" rx="3.1" ry="1.7" fill="#b4aa6a"/><ellipse cx="101.3" cy="163.1" rx="3.3" ry="1.5" fill="#9c9a5c"/><ellipse cx="38.9" cy="169.1" rx="2.2" ry="1.0" fill="#c0b47a"/><ellipse cx="65.0" cy="150.7" rx="4.5" ry="1.3" fill="#9c9a5c"/><ellipse cx="40.1" cy="177.9" rx="3.8" ry="1.4" fill="#9c9a5c"/><ellipse cx="134.1" cy="131.1" rx="3.2" ry="1.5" fill="#b4aa6a"/><ellipse cx="36.8" cy="157.5" rx="2.9" ry="2.3" fill="#b4aa6a"/><ellipse cx="126.4" cy="170.7" rx="4.7" ry="2.3" fill="#a59e5e"/><ellipse cx="24.7" cy="129.5" rx="4.3" ry="1.6" fill="#c0b47a"/><ellipse cx="33.1" cy="179.8" rx="2.1" ry="1.0" fill="#b4aa6a"/><ellipse cx="62.6" cy="146.9" rx="3.3" ry="1.9" fill="#b4aa6a"/><ellipse cx="2.6" cy="157.0" rx="3.3" ry="1.3" fill="#9c9a5c"/><ellipse cx="157.8" cy="124.1" rx="3.3" ry="2.1" fill="#9c9a5c"/><ellipse cx="17.8" cy="125.0" rx="4.9" ry="1.5" fill="#c0b47a"/><ellipse cx="181.8" cy="185.5" rx="4.1" ry="1.6" fill="#a59e5e"/><ellipse cx="20.5" cy="136.0" rx="6.0" ry="2.2" fill="#a59e5e"/><ellipse cx="45.0" cy="186.9" rx="2.4" ry="2.3" fill="#b8a870"/><ellipse cx="122.3" cy="186.5" rx="4.6" ry="1.0" fill="#c0b47a"/><ellipse cx="174.2" cy="137.4" rx="4.0" ry="1.1" fill="#b8a870"/><ellipse cx="169.1" cy="166.9" rx="3.6" ry="2.3" fill="#b4aa6a"/><ellipse cx="32.6" cy="141.1" rx="4.9" ry="2.2" fill="#c0b47a"/></g>
<g filter="url(#bl2)">
<path d="M-5,128 C20,126 45,128 60,132 C75,140 85,150 92,160 C80,175 70,185 60,192 L-5,192 Z" fill="#3e3e22"/>
<path d="M45,135 C55,145 75,160 95,165 C88,175 70,185 50,192 L20,192 Z" fill="#3a3a20"/>
<path d="M100,118 C130,118 160,122 190,126 L190,146 C165,146 135,142 112,140 C104,134 100,126 100,118 Z" fill="#4a4a2c"/>
<path d="M-5,180 C30,182 60,186 80,192 L-5,192 Z" fill="#2e3018"/>
</g>
<rect y="94" width="186" height="16" fill="#2a3020"/>
<g filter="url(#bl)">
<rect x="28" y="103" width="16" height="7" fill="#9a9a8e"/><rect x="60" y="103" width="20" height="7" fill="#a0a094"/><rect x="112" y="104" width="14" height="6" fill="#8a8a80"/><rect x="128" y="102" width="20" height="8" fill="#a8a89c"/>
<rect x="137" y="95" width="3" height="13" fill="#d8d8cc"/><rect x="149" y="95" width="3" height="13" fill="#d8d8cc"/>
<path d="M130,84 C135,80 145,80 150,86 C152,95 145,98 138,96 Z" fill="#8aa060"/>
<path d="M145,84 C150,80 160,82 162,88 C160,95 152,96 147,94 Z" fill="#8aa060"/>
</g>
<rect y="109" width="186" height="6" fill="#cdcec4"/>
<g filter="url(#bl)">
<path d="M-2,110 C5,104 28,102 36,110 C42,118 44,128 38,132 L-2,132 Z" fill="#4a4618"/>
<path d="M5,108 C12,104 22,104 28,108 C30,112 26,115 18,115 Z" fill="#5e5420"/>
<path d="M-2,8 C18,6 35,10 55,5 C70,3 90,6 110,4 C125,5 138,8 146,14 C152,26 162,34 172,30 C178,24 182,14 188,10 L188,96 L-2,96 Z" fill="#2a3e1c"/>
<path d="M100,20 C130,25 150,38 188,34 L188,96 L110,96 Z" fill="#4e6e34"/>
<rect x="-2" y="0" width="12" height="105" fill="#7e9040"/>
<path d="M172,2 L188,2 L188,40 C180,36 174,25 172,2 Z" fill="#4a4a38"/>
<circle cx="83.9" cy="56.0" r="3.8" fill="#5e7a26"/><circle cx="151.3" cy="47.6" r="3.0" fill="#567429"/><circle cx="152.5" cy="69.3" r="1.6" fill="#7c8f43"/><circle cx="33.5" cy="24.2" r="1.6" fill="#5b7426"/><circle cx="41.9" cy="29.4" r="1.5" fill="#151e18"/><circle cx="188.2" cy="84.0" r="3.3" fill="#2b3812"/><circle cx="17.7" cy="29.1" r="1.7" fill="#1c1909"/><circle cx="171.8" cy="47.0" r="4.0" fill="#263b13"/><circle cx="126.6" cy="33.7" r="2.3" fill="#455a18"/><circle cx="44.3" cy="10.1" r="1.6" fill="#192909"/><circle cx="94.7" cy="98.5" r="3.4" fill="#616b2b"/><circle cx="37.9" cy="27.0" r="3.9" fill="#1b2f06"/><circle cx="33.0" cy="99.6" r="3.0" fill="#14310c"/><circle cx="46.6" cy="77.3" r="2.3" fill="#253113"/><circle cx="67.8" cy="62.2" r="1.8" fill="#1b2919"/><circle cx="32.1" cy="15.4" r="3.8" fill="#1c2a09"/><circle cx="117.8" cy="55.4" r="3.2" fill="#7a8e3f"/><circle cx="181.8" cy="23.8" r="3.3" fill="#809e45"/><circle cx="96.9" cy="92.9" r="3.9" fill="#182e1b"/><circle cx="114.9" cy="28.0" r="3.8" fill="#636f30"/><circle cx="51.1" cy="53.1" r="3.9" fill="#132a18"/><circle cx="123.1" cy="69.1" r="3.0" fill="#5b8036"/><circle cx="65.6" cy="31.2" r="1.6" fill="#1e2716"/><circle cx="58.2" cy="99.9" r="1.7" fill="#191e1a"/><circle cx="138.5" cy="13.0" r="3.9" fill="#7f994e"/><circle cx="164.3" cy="41.7" r="3.5" fill="#293c17"/><circle cx="108.9" cy="60.9" r="1.7" fill="#2a411a"/><circle cx="60.4" cy="93.4" r="3.2" fill="#5d7924"/><circle cx="112.4" cy="48.1" r="2.1" fill="#3b5728"/><circle cx="54.8" cy="67.8" r="2.0" fill="#23291c"/><circle cx="92.7" cy="24.1" r="2.5" fill="#21381f"/><circle cx="172.5" cy="88.0" r="2.5" fill="#203019"/><circle cx="9.3" cy="98.0" r="3.6" fill="#151e09"/><circle cx="76.5" cy="62.6" r="2.7" fill="#2c401b"/><circle cx="58.5" cy="82.9" r="2.2" fill="#122c13"/><circle cx="56.3" cy="79.2" r="1.5" fill="#1c2619"/><circle cx="48.2" cy="77.9" r="3.5" fill="#2a3e1c"/><circle cx="119.9" cy="36.9" r="1.7" fill="#58772b"/><circle cx="-0.9" cy="47.2" r="3.3" fill="#183214"/><circle cx="178.8" cy="50.0" r="4.0" fill="#5c7d3a"/><circle cx="13.7" cy="93.3" r="3.3" fill="#1d261b"/><circle cx="-1.7" cy="55.0" r="3.1" fill="#213011"/><circle cx="122.1" cy="20.5" r="3.3" fill="#365c29"/><circle cx="184.7" cy="53.7" r="3.5" fill="#7d9a3c"/><circle cx="62.7" cy="42.1" r="2.2" fill="#102a0d"/><circle cx="3.7" cy="53.3" r="3.2" fill="#1d361c"/><circle cx="96.5" cy="67.8" r="2.6" fill="#607632"/><circle cx="81.4" cy="55.9" r="3.6" fill="#1e2818"/><circle cx="104.5" cy="31.2" r="2.5" fill="#4a7036"/><circle cx="97.7" cy="57.3" r="2.0" fill="#141e0f"/><circle cx="173.1" cy="54.4" r="4.0" fill="#3b5817"/><circle cx="100.4" cy="41.4" r="3.9" fill="#233912"/><circle cx="80.3" cy="81.6" r="3.8" fill="#5f6b2b"/><circle cx="2.6" cy="26.0" r="3.3" fill="#0c1c05"/><circle cx="51.5" cy="72.4" r="2.1" fill="#577725"/><circle cx="95.0" cy="25.1" r="2.0" fill="#231e14"/><circle cx="155.4" cy="61.6" r="2.8" fill="#5a7f39"/><circle cx="139.2" cy="81.1" r="3.8" fill="#283f15"/><circle cx="146.4" cy="19.5" r="1.7" fill="#576f2f"/><circle cx="80.5" cy="94.1" r="2.9" fill="#2a441f"/><circle cx="0.4" cy="20.1" r="3.2" fill="#231e10"/><circle cx="142.6" cy="50.3" r="3.2" fill="#657728"/><circle cx="143.3" cy="61.3" r="3.8" fill="#6b853b"/><circle cx="158.3" cy="99.0" r="3.8" fill="#384827"/><circle cx="72.0" cy="42.6" r="2.4" fill="#202318"/><circle cx="84.2" cy="73.9" r="2.5" fill="#202419"/><circle cx="59.1" cy="8.5" r="3.6" fill="#222e11"/><circle cx="33.7" cy="58.5" r="2.4" fill="#152e14"/><circle cx="146.4" cy="81.5" r="2.5" fill="#2d3b21"/><circle cx="143.9" cy="40.6" r="3.3" fill="#415118"/><circle cx="167.5" cy="99.1" r="3.8" fill="#315827"/><circle cx="61.9" cy="66.0" r="2.9" fill="#132811"/><circle cx="37.9" cy="12.0" r="2.5" fill="#122a16"/><circle cx="46.3" cy="40.2" r="1.6" fill="#20230f"/><circle cx="49.9" cy="34.1" r="2.9" fill="#687436"/><circle cx="119.5" cy="81.0" r="1.7" fill="#345821"/><circle cx="183.3" cy="85.6" r="2.9" fill="#354f1f"/><circle cx="73.5" cy="31.2" r="2.8" fill="#627428"/><circle cx="134.6" cy="29.6" r="1.5" fill="#607a30"/><circle cx="57.5" cy="39.8" r="3.0" fill="#3a3d24"/><circle cx="79.5" cy="47.8" r="3.9" fill="#14241a"/><circle cx="181.3" cy="24.5" r="3.3" fill="#3e541a"/><circle cx="7.0" cy="52.8" r="1.8" fill="#57712f"/><circle cx="119.8" cy="68.2" r="2.4" fill="#637c31"/><circle cx="18.9" cy="89.3" r="3.5" fill="#222314"/><circle cx="136.2" cy="69.9" r="2.0" fill="#2b3116"/><circle cx="185.1" cy="91.6" r="3.7" fill="#39461f"/><circle cx="39.7" cy="27.8" r="3.4" fill="#2b4025"/><circle cx="89.9" cy="35.4" r="2.3" fill="#637924"/><circle cx="20.0" cy="80.9" r="3.1" fill="#1f2414"/><circle cx="71.9" cy="15.1" r="1.9" fill="#232210"/><circle cx="140.3" cy="92.1" r="2.6" fill="#273718"/><circle cx="101.4" cy="43.2" r="2.9" fill="#233f11"/><circle cx="37.9" cy="66.2" r="1.7" fill="#273f15"/><circle cx="123.2" cy="32.7" r="3.8" fill="#86974e"/><circle cx="177.5" cy="91.3" r="2.6" fill="#253225"/><circle cx="137.1" cy="51.6" r="1.7" fill="#789947"/><circle cx="149.9" cy="73.9" r="2.4" fill="#739242"/><circle cx="30.9" cy="75.9" r="3.7" fill="#2e3410"/><circle cx="27.5" cy="29.6" r="1.6" fill="#201d10"/><circle cx="148.3" cy="8.4" r="1.7" fill="#434c22"/><circle cx="24.6" cy="74.6" r="3.1" fill="#222c1c"/><circle cx="61.9" cy="45.9" r="2.4" fill="#23290f"/><circle cx="100.2" cy="72.1" r="3.3" fill="#142912"/><circle cx="160.9" cy="80.6" r="3.6" fill="#7c8e41"/><circle cx="133.3" cy="80.2" r="2.6" fill="#7b863a"/><circle cx="119.0" cy="68.4" r="2.3" fill="#71874a"/><circle cx="8.4" cy="30.8" r="1.8" fill="#2b4e24"/><circle cx="89.4" cy="80.0" r="2.3" fill="#17270e"/><circle cx="134.7" cy="59.5" r="2.1" fill="#61763f"/><circle cx="177.0" cy="62.7" r="3.9" fill="#7a8b3f"/><circle cx="180.5" cy="66.0" r="3.4" fill="#364a1a"/><circle cx="178.9" cy="80.1" r="2.5" fill="#2b2f24"/><circle cx="168.3" cy="87.4" r="3.8" fill="#789043"/><circle cx="27.2" cy="15.7" r="2.3" fill="#304011"/><circle cx="139.4" cy="61.9" r="2.8" fill="#30551a"/><circle cx="154.7" cy="84.6" r="3.6" fill="#345224"/><circle cx="167.8" cy="69.4" r="1.7" fill="#1c3115"/><circle cx="128.0" cy="78.1" r="2.6" fill="#37501d"/><circle cx="156.7" cy="31.1" r="2.3" fill="#3d5e23"/><circle cx="24.0" cy="66.8" r="3.2" fill="#3b4c1f"/><circle cx="-0.6" cy="37.7" r="3.3" fill="#192519"/><circle cx="161.4" cy="84.5" r="3.3" fill="#557537"/><circle cx="54.3" cy="33.7" r="2.5" fill="#293f19"/><circle cx="18.0" cy="31.0" r="2.2" fill="#636f33"/><circle cx="14.7" cy="14.1" r="1.7" fill="#343f15"/><circle cx="4.0" cy="46.3" r="3.3" fill="#101c07"/><circle cx="75.1" cy="7.3" r="3.8" fill="#676b27"/><circle cx="25.4" cy="69.1" r="2.7" fill="#61772f"/><circle cx="58.0" cy="78.9" r="2.1" fill="#1c230b"/><circle cx="55.9" cy="44.1" r="2.9" fill="#1e321a"/><circle cx="114.4" cy="15.8" r="3.4" fill="#829346"/><circle cx="24.2" cy="71.3" r="4.0" fill="#252c1a"/><circle cx="123.6" cy="77.7" r="1.8" fill="#748f3d"/><circle cx="175.4" cy="36.1" r="2.7" fill="#3b591a"/><circle cx="106.3" cy="54.6" r="1.7" fill="#7b9a4d"/><circle cx="61.3" cy="14.6" r="3.8" fill="#112a09"/><circle cx="107.1" cy="83.1" r="2.0" fill="#222710"/><circle cx="147.3" cy="93.0" r="4.0" fill="#567b3b"/><circle cx="70.3" cy="59.2" r="3.5" fill="#0f2105"/><circle cx="74.9" cy="33.6" r="1.8" fill="#1f2916"/><circle cx="4.3" cy="67.1" r="1.9" fill="#61722b"/><circle cx="116.8" cy="68.9" r="3.4" fill="#254122"/><circle cx="161.2" cy="40.9" r="2.6" fill="#487129"/><circle cx="97.0" cy="42.0" r="1.6" fill="#11250d"/><circle cx="69.3" cy="32.2" r="3.5" fill="#232218"/><circle cx="43.5" cy="87.3" r="3.9" fill="#627327"/><circle cx="55.8" cy="39.6" r="2.1" fill="#1f2716"/><circle cx="67.8" cy="54.6" r="2.9" fill="#183115"/><circle cx="149.1" cy="12.4" r="2.8" fill="#1e3415"/><circle cx="59.4" cy="6.3" r="3.7" fill="#1a1e13"/><circle cx="41.3" cy="30.6" r="2.6" fill="#243921"/><circle cx="184.6" cy="47.3" r="2.0" fill="#89993d"/><circle cx="57.6" cy="85.9" r="3.7" fill="#0f2a18"/><circle cx="35.8" cy="63.2" r="2.0" fill="#191f15"/><circle cx="181.6" cy="27.4" r="2.6" fill="#5b8137"/><circle cx="76.7" cy="16.9" r="3.7" fill="#1a1c08"/><circle cx="42.2" cy="66.5" r="3.5" fill="#2e3a11"/><circle cx="96.1" cy="97.7" r="3.7" fill="#212816"/><circle cx="14.3" cy="98.3" r="2.6" fill="#133008"/><circle cx="109.6" cy="53.7" r="2.6" fill="#476432"/><circle cx="44.2" cy="27.9" r="2.9" fill="#23261b"/><circle cx="116.4" cy="91.6" r="3.0" fill="#3f4f1d"/><circle cx="103.8" cy="64.5" r="2.4" fill="#313c17"/><circle cx="155.8" cy="63.5" r="4.0" fill="#5b7d2f"/><circle cx="80.6" cy="66.8" r="2.9" fill="#2d3f13"/><circle cx="90.9" cy="22.1" r="3.0" fill="#5a6d36"/><circle cx="7.1" cy="44.8" r="3.7" fill="#213018"/><circle cx="80.5" cy="44.2" r="2.2" fill="#101e09"/><circle cx="119.9" cy="57.9" r="3.3" fill="#51763a"/><circle cx="154.4" cy="73.8" r="3.5" fill="#6a923a"/><circle cx="45.9" cy="16.0" r="3.2" fill="#1b250c"/><circle cx="86.6" cy="69.9" r="3.3" fill="#0e2811"/><circle cx="22.8" cy="74.5" r="2.8" fill="#0c210f"/><circle cx="14.6" cy="55.6" r="2.7" fill="#1f2613"/><circle cx="184.4" cy="61.2" r="2.2" fill="#384a23"/><circle cx="176.0" cy="36.4" r="2.3" fill="#4a622e"/><circle cx="188.0" cy="73.7" r="2.9" fill="#59753d"/><circle cx="70.2" cy="78.1" r="2.0" fill="#223f1f"/><circle cx="89.2" cy="40.0" r="3.0" fill="#162419"/><circle cx="127.4" cy="86.3" r="2.0" fill="#71823c"/><circle cx="179.2" cy="62.1" r="2.8" fill="#26391e"/><circle cx="38.8" cy="10.3" r="1.6" fill="#3a4321"/><circle cx="135.9" cy="90.7" r="1.6" fill="#2c3623"/><circle cx="70.2" cy="25.6" r="3.7" fill="#294316"/><circle cx="4.8" cy="15.1" r="3.0" fill="#10210e"/><circle cx="130.3" cy="51.7" r="2.9" fill="#86993e"/><circle cx="36.3" cy="28.0" r="3.3" fill="#57732a"/><circle cx="16.7" cy="37.0" r="3.0" fill="#142316"/><circle cx="105.7" cy="80.9" r="3.9" fill="#2b3120"/><circle cx="104.2" cy="35.3" r="1.8" fill="#7c983d"/><circle cx="79.1" cy="39.2" r="1.7" fill="#676e31"/><circle cx="39.6" cy="92.5" r="2.0" fill="#13290a"/><circle cx="14.9" cy="34.2" r="2.6" fill="#1d281b"/><circle cx="56.2" cy="91.5" r="3.8" fill="#131a0d"/><circle cx="7.5" cy="49.6" r="3.0" fill="#637a24"/><circle cx="3.8" cy="32.4" r="2.4" fill="#233d12"/><circle cx="87.1" cy="61.5" r="3.9" fill="#1e3e13"/><circle cx="101.2" cy="61.3" r="1.7" fill="#1c2a0c"/><circle cx="23.1" cy="50.7" r="2.3" fill="#27301b"/><circle cx="48.8" cy="25.8" r="2.1" fill="#12280f"/><circle cx="43.0" cy="49.4" r="3.1" fill="#132e19"/><circle cx="129.7" cy="79.7" r="2.2" fill="#3e4c28"/><circle cx="130.5" cy="68.7" r="3.9" fill="#537a36"/><circle cx="105.3" cy="37.0" r="2.2" fill="#4f6b2a"/><circle cx="132.6" cy="91.7" r="3.3" fill="#40562b"/><circle cx="56.6" cy="84.9" r="2.8" fill="#313f23"/><circle cx="45.7" cy="50.7" r="3.5" fill="#5a752a"/><circle cx="128.1" cy="18.4" r="3.6" fill="#657e33"/><circle cx="77.8" cy="70.7" r="3.1" fill="#151f0a"/><circle cx="116.3" cy="29.2" r="3.1" fill="#3b5825"/><circle cx="175.1" cy="26.8" r="2.2" fill="#84934e"/><circle cx="133.9" cy="11.8" r="1.6" fill="#7f964c"/><circle cx="74.7" cy="90.5" r="3.6" fill="#19230c"/><circle cx="150.7" cy="83.9" r="2.2" fill="#778a39"/><circle cx="107.7" cy="67.5" r="2.0" fill="#2e3212"/><circle cx="17.6" cy="93.4" r="2.1" fill="#5d6c34"/><circle cx="48.9" cy="56.9" r="2.2" fill="#5a6d2c"/><circle cx="67.2" cy="26.0" r="1.6" fill="#0c2812"/><circle cx="-2.2" cy="33.6" r="1.8" fill="#142d0f"/><circle cx="76.6" cy="80.7" r="2.5" fill="#102515"/><circle cx="45.5" cy="18.9" r="2.2" fill="#272b1a"/><circle cx="136.2" cy="17.6" r="1.6" fill="#5f7b2d"/><circle cx="1.6" cy="55.6" r="1.7" fill="#556d36"/><circle cx="-0.9" cy="52.7" r="3.5" fill="#22250c"/><circle cx="99.0" cy="66.6" r="3.5" fill="#122f0e"/><circle cx="132.4" cy="25.0" r="3.8" fill="#324d1c"/><circle cx="136.1" cy="50.6" r="2.2" fill="#849442"/><circle cx="9.8" cy="65.3" r="3.0" fill="#243e13"/><circle cx="139.7" cy="54.6" r="3.2" fill="#5b712f"/><circle cx="15.2" cy="95.1" r="3.6" fill="#142d0c"/><circle cx="141.8" cy="10.8" r="4.0" fill="#274219"/><circle cx="146.8" cy="88.8" r="3.5" fill="#3a5820"/><circle cx="32.2" cy="35.7" r="4.0" fill="#22301c"/><circle cx="7.6" cy="61.6" r="2.4" fill="#66752d"/><circle cx="157.8" cy="69.0" r="2.6" fill="#71893b"/><circle cx="112.3" cy="57.3" r="2.8" fill="#374f1f"/><circle cx="59.3" cy="53.7" r="2.3" fill="#2c361d"/><circle cx="187.0" cy="40.2" r="3.7" fill="#647f2a"/><circle cx="32.9" cy="92.4" r="3.5" fill="#243214"/><circle cx="164.1" cy="71.2" r="2.1" fill="#253823"/><circle cx="34.6" cy="28.0" r="3.1" fill="#0e2114"/><circle cx="164.0" cy="97.3" r="1.7" fill="#607133"/><circle cx="175.3" cy="95.5" r="2.0" fill="#1e3119"/><circle cx="160.0" cy="61.7" r="3.8" fill="#2e5224"/><circle cx="57.7" cy="95.7" r="3.9" fill="#1f2608"/><circle cx="62.2" cy="31.5" r="3.1" fill="#2b3413"/><circle cx="144.1" cy="17.2" r="3.0" fill="#344d28"/><circle cx="114.1" cy="35.8" r="2.0" fill="#3f591d"/><circle cx="56.6" cy="40.8" r="1.9" fill="#2d431e"/><circle cx="50.6" cy="13.4" r="1.8" fill="#122709"/><circle cx="108.2" cy="28.5" r="3.7" fill="#8b8d48"/><circle cx="40.3" cy="47.7" r="2.0" fill="#617124"/><circle cx="77.5" cy="28.1" r="2.6" fill="#233d1c"/><circle cx="44.0" cy="41.2" r="1.8" fill="#15240c"/><circle cx="154.5" cy="85.0" r="3.0" fill="#364a29"/><circle cx="110.3" cy="69.7" r="4.0" fill="#3a491b"/><circle cx="29.7" cy="50.6" r="2.7" fill="#344f25"/><circle cx="187.6" cy="39.5" r="3.6" fill="#547224"/><circle cx="85.7" cy="40.1" r="3.1" fill="#1e2e13"/><circle cx="156.4" cy="51.6" r="1.7" fill="#325e23"/><circle cx="148.0" cy="90.6" r="3.2" fill="#788440"/><circle cx="0.0" cy="86.0" r="3.9" fill="#0e2110"/><circle cx="184.1" cy="77.6" r="1.7" fill="#2e4a27"/><circle cx="94.9" cy="30.8" r="2.4" fill="#182b0b"/><circle cx="38.8" cy="45.2" r="2.9" fill="#577a33"/><circle cx="93.7" cy="14.4" r="2.9" fill="#1c2f1b"/><circle cx="182.0" cy="41.3" r="1.5" fill="#647036"/><circle cx="69.3" cy="29.4" r="3.0" fill="#576f36"/><circle cx="120.5" cy="84.8" r="1.6" fill="#6e8641"/><circle cx="123.2" cy="41.9" r="3.7" fill="#627f3a"/><circle cx="106.0" cy="50.1" r="3.8" fill="#2a351b"/><circle cx="149.0" cy="38.5" r="3.1" fill="#818c4c"/><circle cx="8.9" cy="52.8" r="2.9" fill="#657631"/><circle cx="3.2" cy="36.0" r="3.9" fill="#202708"/><circle cx="75.1" cy="96.6" r="1.5" fill="#19221b"/><circle cx="130.2" cy="84.0" r="2.0" fill="#334f24"/><circle cx="141.7" cy="5.3" r="1.7" fill="#839c4e"/><circle cx="121.3" cy="37.3" r="1.7" fill="#536036"/><circle cx="156.7" cy="32.8" r="2.3" fill="#647a29"/><circle cx="143.6" cy="4.8" r="3.1" fill="#486531"/><circle cx="115.5" cy="68.3" r="2.0" fill="#3d4f20"/><circle cx="117.1" cy="91.4" r="3.6" fill="#5f763c"/><circle cx="69.5" cy="44.8" r="2.6" fill="#142a13"/><circle cx="157.4" cy="95.7" r="2.4" fill="#3b4d27"/><circle cx="122.3" cy="11.4" r="3.7" fill="#3a5526"/><circle cx="20.7" cy="87.4" r="2.7" fill="#1d2b09"/><circle cx="132.0" cy="49.4" r="2.6" fill="#28391a"/><circle cx="161.1" cy="77.3" r="2.3" fill="#334920"/><circle cx="110.5" cy="52.0" r="2.5" fill="#516832"/><circle cx="25.4" cy="70.4" r="2.5" fill="#191d0a"/><circle cx="137.2" cy="57.5" r="2.1" fill="#3d4b1e"/><circle cx="38.0" cy="90.8" r="1.7" fill="#273513"/><circle cx="90.5" cy="23.1" r="3.4" fill="#192308"/><circle cx="187.7" cy="35.2" r="1.9" fill="#243323"/><circle cx="143.8" cy="80.6" r="1.7" fill="#547137"/><circle cx="114.1" cy="12.1" r="3.4" fill="#49722a"/><circle cx="59.3" cy="10.9" r="3.5" fill="#152d14"/><circle cx="47.8" cy="24.9" r="1.6" fill="#232b0d"/><circle cx="104.7" cy="26.3" r="1.7" fill="#375020"/><circle cx="162.0" cy="85.5" r="3.0" fill="#5a7b3f"/><circle cx="145.8" cy="26.0" r="1.6" fill="#859645"/><circle cx="128.8" cy="34.6" r="2.0" fill="#4b6d34"/><circle cx="11.5" cy="55.0" r="2.9" fill="#364212"/><circle cx="176.2" cy="96.1" r="2.0" fill="#223f13"/><circle cx="2.7" cy="57.1" r="4.0" fill="#3b4f24"/><circle cx="101.1" cy="43.7" r="3.2" fill="#3c521f"/><circle cx="34.9" cy="70.5" r="2.5" fill="#587623"/><circle cx="177.5" cy="89.9" r="1.7" fill="#213217"/><circle cx="26.0" cy="54.1" r="3.7" fill="#25350a"/><circle cx="91.0" cy="59.1" r="3.2" fill="#23240b"/><circle cx="144.7" cy="15.7" r="3.8" fill="#345c29"/><circle cx="156.3" cy="68.8" r="2.8" fill="#2d4729"/><circle cx="184.3" cy="83.3" r="2.5" fill="#203523"/><circle cx="68.0" cy="72.3" r="2.8" fill="#273420"/><circle cx="30.7" cy="15.0" r="2.1" fill="#597b26"/><circle cx="127.2" cy="61.0" r="3.0" fill="#272e18"/><circle cx="9.6" cy="51.0" r="3.3" fill="#213214"/><circle cx="12.1" cy="76.3" r="2.1" fill="#142e0c"/><circle cx="11.0" cy="83.5" r="4.0" fill="#647829"/><circle cx="148.8" cy="37.9" r="2.2" fill="#586036"/><circle cx="3.3" cy="95.4" r="2.6" fill="#16271b"/><circle cx="181.4" cy="93.1" r="2.4" fill="#527c3f"/><circle cx="34.0" cy="13.6" r="3.2" fill="#1e2e0f"/><circle cx="68.5" cy="12.0" r="2.2" fill="#111f0c"/><circle cx="6.5" cy="30.7" r="2.0" fill="#112315"/><circle cx="82.0" cy="80.3" r="2.2" fill="#0d1d06"/><circle cx="56.4" cy="76.1" r="3.8" fill="#153114"/><circle cx="17.1" cy="48.4" r="3.7" fill="#1b2a18"/><circle cx="86.3" cy="19.1" r="3.9" fill="#284b1a"/><circle cx="7.0" cy="16.3" r="1.9" fill="#384f12"/><circle cx="78.4" cy="96.1" r="3.0" fill="#151c05"/><circle cx="47.0" cy="61.9" r="2.4" fill="#5a7726"/><circle cx="24.6" cy="57.9" r="3.0" fill="#5f7229"/><circle cx="172.4" cy="23.3" r="3.8" fill="#5e793a"/><circle cx="143.9" cy="93.4" r="2.3" fill="#6c943c"/><circle cx="15.6" cy="68.7" r="2.4" fill="#142c18"/><circle cx="121.9" cy="68.6" r="3.2" fill="#6e8d43"/><circle cx="92.5" cy="48.2" r="3.1" fill="#112106"/><circle cx="150.6" cy="23.4" r="3.6" fill="#375d20"/><circle cx="78.8" cy="55.5" r="3.9" fill="#666c29"/><circle cx="124.8" cy="50.3" r="3.8" fill="#62762d"/><circle cx="125.2" cy="12.8" r="2.1" fill="#889c3f"/><circle cx="153.4" cy="30.3" r="2.1" fill="#45581f"/><circle cx="120.7" cy="67.5" r="2.5" fill="#40491f"/><circle cx="52.3" cy="39.0" r="2.1" fill="#1f2d1b"/><circle cx="116.6" cy="12.5" r="3.3" fill="#3a531d"/><circle cx="47.8" cy="49.4" r="3.8" fill="#1b2a0a"/><circle cx="27.9" cy="79.6" r="2.1" fill="#343e15"/><circle cx="79.8" cy="46.7" r="3.2" fill="#182617"/><circle cx="60.5" cy="92.7" r="3.8" fill="#283b15"/><circle cx="18.0" cy="21.8" r="4.0" fill="#0c2a0f"/><circle cx="87.8" cy="74.5" r="2.1" fill="#262a12"/><circle cx="73.5" cy="34.0" r="3.9" fill="#28421b"/><circle cx="76.6" cy="40.7" r="2.1" fill="#676a2b"/><circle cx="88.4" cy="41.6" r="3.1" fill="#1c2e18"/><circle cx="45.2" cy="54.1" r="4.0" fill="#13211b"/><circle cx="115.1" cy="18.4" r="3.9" fill="#546532"/><circle cx="121.4" cy="70.6" r="2.6" fill="#7c953a"/><circle cx="45.5" cy="90.5" r="2.9" fill="#11260d"/><circle cx="21.5" cy="42.6" r="2.9" fill="#2c4c16"/><circle cx="162.8" cy="40.9" r="1.7" fill="#48602c"/><circle cx="72.1" cy="46.9" r="1.8" fill="#252c15"/><circle cx="57.6" cy="98.4" r="1.8" fill="#1e401d"/><circle cx="107.8" cy="73.9" r="3.7" fill="#193218"/><circle cx="83.1" cy="36.6" r="2.6" fill="#5d6d23"/><circle cx="164.5" cy="62.2" r="1.7" fill="#758d44"/><circle cx="127.1" cy="50.5" r="3.5" fill="#2f3114"/><circle cx="40.9" cy="60.4" r="3.0" fill="#314017"/><circle cx="109.7" cy="72.7" r="2.9" fill="#557132"/><circle cx="46.8" cy="61.4" r="2.1" fill="#5a7c31"/><circle cx="80.3" cy="49.8" r="1.6" fill="#242a15"/><circle cx="133.7" cy="76.2" r="3.4" fill="#6e9042"/><circle cx="101.5" cy="98.7" r="1.8" fill="#1b2c10"/><circle cx="1.1" cy="75.7" r="2.4" fill="#5b7b32"/><circle cx="91.9" cy="48.7" r="3.8" fill="#626a23"/><circle cx="85.9" cy="55.7" r="2.6" fill="#1f2014"/><circle cx="11.5" cy="30.0" r="3.2" fill="#2f4020"/><circle cx="25.1" cy="57.8" r="2.8" fill="#192b0a"/><circle cx="56.7" cy="87.3" r="3.8" fill="#18231c"/><circle cx="8.0" cy="58.2" r="3.2" fill="#2f341d"/><circle cx="131.3" cy="33.7" r="3.7" fill="#657c28"/><circle cx="173.1" cy="78.8" r="2.2" fill="#20321e"/><circle cx="25.8" cy="96.4" r="2.4" fill="#666c26"/><circle cx="110.8" cy="76.4" r="2.7" fill="#203f23"/><circle cx="40.5" cy="36.4" r="2.1" fill="#354d20"/><circle cx="144.2" cy="68.0" r="3.9" fill="#2e4621"/><circle cx="186.1" cy="60.0" r="3.7" fill="#3c4e2c"/><circle cx="115.0" cy="55.4" r="1.6" fill="#5d7436"/><circle cx="52.5" cy="56.1" r="2.4" fill="#1e4214"/><circle cx="-0.1" cy="36.4" r="2.5" fill="#19251a"/><circle cx="87.1" cy="51.2" r="2.3" fill="#212b0e"/><circle cx="134.9" cy="24.4" r="3.5" fill="#829546"/><circle cx="99.3" cy="78.9" r="3.7" fill="#192811"/><circle cx="84.6" cy="52.2" r="2.4" fill="#1b250d"/><circle cx="93.2" cy="22.7" r="3.0" fill="#3a4c13"/><circle cx="44.4" cy="97.1" r="2.9" fill="#1d1e0d"/><circle cx="65.5" cy="95.5" r="2.8" fill="#0c1b0c"/><circle cx="119.8" cy="11.1" r="2.9" fill="#293a11"/><circle cx="133.2" cy="6.9" r="3.4" fill="#627230"/><circle cx="101.4" cy="33.7" r="2.9" fill="#466330"/><circle cx="143.3" cy="33.4" r="3.9" fill="#507226"/><circle cx="33.1" cy="79.7" r="2.1" fill="#152319"/><circle cx="24.0" cy="20.2" r="1.6" fill="#252f1d"/><circle cx="151.6" cy="90.1" r="3.4" fill="#283a24"/><circle cx="5.4" cy="56.3" r="2.5" fill="#1d2312"/><circle cx="76.8" cy="65.5" r="1.6" fill="#173015"/><circle cx="9.7" cy="18.6" r="2.1" fill="#303d11"/><circle cx="118.7" cy="65.1" r="3.2" fill="#252f1b"/><circle cx="70.7" cy="53.1" r="1.6" fill="#132510"/><circle cx="71.7" cy="94.3" r="3.1" fill="#152811"/><circle cx="144.0" cy="56.5" r="2.1" fill="#596e37"/><circle cx="70.6" cy="22.5" r="2.6" fill="#637831"/><circle cx="6.9" cy="82.5" r="1.9" fill="#20340e"/><circle cx="121.3" cy="14.5" r="3.3" fill="#657a3a"/><circle cx="4.2" cy="11.3" r="2.2" fill="#1d2b0b"/><circle cx="155.7" cy="79.2" r="2.5" fill="#748c3e"/><circle cx="115.1" cy="19.3" r="2.3" fill="#3a5a27"/><circle cx="52.6" cy="28.6" r="3.2" fill="#1b3111"/><circle cx="132.7" cy="90.8" r="1.6" fill="#213225"/><circle cx="16.1" cy="73.4" r="3.1" fill="#2f4d21"/><circle cx="18.6" cy="98.0" r="3.4" fill="#1d2713"/><circle cx="107.8" cy="88.1" r="3.7" fill="#31401c"/><circle cx="181.4" cy="14.4" r="2.5" fill="#476e30"/><circle cx="80.4" cy="57.9" r="2.0" fill="#192315"/><circle cx="32.9" cy="50.6" r="3.0" fill="#222113"/><circle cx="60.0" cy="27.5" r="4.0" fill="#284424"/><circle cx="150.9" cy="17.8" r="2.7" fill="#303816"/><circle cx="73.3" cy="31.3" r="3.4" fill="#5f7535"/><circle cx="122.8" cy="95.8" r="1.8" fill="#5d763d"/><circle cx="101.7" cy="19.5" r="3.2" fill="#8b8d3d"/><circle cx="3.9" cy="45.9" r="3.6" fill="#2d4522"/><circle cx="121.4" cy="47.6" r="1.8" fill="#49602d"/><circle cx="21.6" cy="60.3" r="3.6" fill="#30371b"/><circle cx="68.3" cy="42.6" r="3.1" fill="#25301d"/><circle cx="52.1" cy="77.4" r="3.1" fill="#597134"/><circle cx="89.6" cy="91.0" r="1.9" fill="#1f321b"/><circle cx="128.0" cy="99.1" r="3.5" fill="#1d3a1a"/><circle cx="50.7" cy="96.1" r="3.2" fill="#627a24"/><circle cx="19.6" cy="70.2" r="2.8" fill="#3b441d"/><circle cx="15.8" cy="23.0" r="1.9" fill="#2d4323"/><circle cx="167.1" cy="48.3" r="1.8" fill="#577f36"/><circle cx="105.8" cy="15.5" r="2.3" fill="#616f3a"/><circle cx="61.4" cy="14.4" r="3.5" fill="#172c0b"/><circle cx="74.1" cy="92.0" r="3.4" fill="#10280f"/><circle cx="54.8" cy="91.7" r="2.0" fill="#3b4415"/><circle cx="84.9" cy="18.1" r="1.7" fill="#677823"/><circle cx="93.8" cy="14.0" r="2.9" fill="#232213"/><circle cx="57.9" cy="16.8" r="3.4" fill="#142917"/><circle cx="176.9" cy="22.4" r="1.7" fill="#476233"/><circle cx="92.3" cy="64.4" r="2.4" fill="#1f341b"/><circle cx="44.6" cy="9.0" r="2.8" fill="#1e2d14"/><circle cx="165.3" cy="97.0" r="2.5" fill="#2e3d14"/><circle cx="45.1" cy="46.6" r="2.9" fill="#2d3d1f"/><circle cx="71.1" cy="64.3" r="2.1" fill="#294312"/><circle cx="171.9" cy="59.2" r="3.1" fill="#637839"/><circle cx="99.6" cy="77.7" r="2.7" fill="#1d200e"/><circle cx="35.7" cy="29.1" r="2.6" fill="#243913"/><circle cx="106.4" cy="77.9" r="2.7" fill="#0e1a14"/><circle cx="84.0" cy="59.9" r="2.3" fill="#16210a"/><circle cx="22.6" cy="62.2" r="3.4" fill="#333e22"/><circle cx="14.3" cy="55.7" r="1.7" fill="#0f250a"/><circle cx="57.9" cy="29.6" r="2.2" fill="#1b250e"/><circle cx="146.3" cy="66.9" r="1.9" fill="#799048"/><circle cx="113.7" cy="82.1" r="3.4" fill="#6a8437"/><circle cx="27.8" cy="95.9" r="2.3" fill="#576c2e"/><circle cx="117.7" cy="61.0" r="1.8" fill="#2c2e1c"/><circle cx="14.9" cy="88.4" r="1.7" fill="#2a3d1e"/><circle cx="31.9" cy="32.8" r="3.1" fill="#5e6e30"/><circle cx="34.9" cy="53.3" r="3.0" fill="#1f1d12"/><circle cx="117.3" cy="47.6" r="3.2" fill="#213f20"/><circle cx="176.9" cy="20.9" r="1.8" fill="#5d8029"/><circle cx="-2.0" cy="84.3" r="3.8" fill="#102513"/><circle cx="146.0" cy="43.7" r="2.6" fill="#2d3f1a"/><circle cx="179.7" cy="87.6" r="3.9" fill="#537838"/><circle cx="175.3" cy="55.0" r="3.7" fill="#606e33"/><circle cx="67.8" cy="31.1" r="1.8" fill="#1f2a0e"/><circle cx="32.4" cy="34.1" r="2.6" fill="#142a15"/><circle cx="13.0" cy="18.9" r="2.3" fill="#112c06"/><circle cx="16.2" cy="96.9" r="3.8" fill="#1e2518"/><circle cx="177.1" cy="17.1" r="4.0" fill="#677231"/><circle cx="109.7" cy="31.9" r="1.7" fill="#2f3a11"/><circle cx="51.8" cy="29.2" r="2.5" fill="#172906"/><circle cx="44.1" cy="73.1" r="2.4" fill="#1d3210"/><circle cx="48.9" cy="29.2" r="3.8" fill="#171e15"/><circle cx="61.5" cy="49.1" r="2.4" fill="#2a301e"/><circle cx="27.2" cy="23.8" r="3.5" fill="#122f0f"/><circle cx="82.2" cy="52.6" r="1.6" fill="#142912"/><circle cx="15.6" cy="38.6" r="2.2" fill="#647934"/><circle cx="136.4" cy="67.4" r="2.7" fill="#3d5624"/><circle cx="104.3" cy="88.8" r="3.0" fill="#1b350d"/><circle cx="105.1" cy="14.4" r="3.4" fill="#203c20"/><circle cx="79.8" cy="32.8" r="3.7" fill="#667828"/><circle cx="12.5" cy="70.9" r="3.3" fill="#172706"/><circle cx="81.9" cy="24.9" r="1.9" fill="#23300a"/><circle cx="82.6" cy="27.3" r="3.2" fill="#0f200f"/><circle cx="138.3" cy="85.7" r="2.8" fill="#538036"/><circle cx="132.1" cy="65.6" r="2.2" fill="#2f582d"/><circle cx="179.7" cy="94.4" r="3.1" fill="#31552b"/><circle cx="47.6" cy="10.2" r="3.9" fill="#333e19"/><circle cx="171.5" cy="76.3" r="3.9" fill="#2a3017"/><circle cx="179.6" cy="17.4" r="3.4" fill="#455d26"/><circle cx="159.9" cy="82.1" r="2.9" fill="#3e5828"/><circle cx="8.3" cy="39.3" r="2.8" fill="#192d19"/><circle cx="82.8" cy="67.6" r="3.2" fill="#303d25"/><circle cx="143.2" cy="37.9" r="3.3" fill="#273419"/><circle cx="127.7" cy="54.8" r="1.8" fill="#455d26"/><circle cx="23.3" cy="96.8" r="3.6" fill="#242b08"/><circle cx="163.6" cy="60.9" r="3.3" fill="#57742e"/><circle cx="127.8" cy="91.1" r="3.2" fill="#799547"/><circle cx="187.1" cy="46.0" r="1.5" fill="#526233"/><circle cx="67.3" cy="6.2" r="3.1" fill="#2a431a"/><circle cx="160.7" cy="77.2" r="4.0" fill="#7b8e45"/><circle cx="103.4" cy="91.7" r="1.7" fill="#192315"/><circle cx="15.7" cy="30.6" r="2.5" fill="#0d230c"/><circle cx="5.8" cy="62.2" r="3.2" fill="#1c2208"/><circle cx="54.9" cy="89.6" r="2.2" fill="#667530"/><circle cx="65.7" cy="40.8" r="3.7" fill="#1f2c19"/><circle cx="22.6" cy="31.1" r="2.4" fill="#203e1f"/><circle cx="186.9" cy="77.5" r="1.9" fill="#39521c"/><circle cx="182.9" cy="51.0" r="2.2" fill="#25311d"/><circle cx="46.9" cy="21.8" r="2.3" fill="#1a2e1b"/><circle cx="104.9" cy="20.9" r="3.4" fill="#8a9348"/><circle cx="152.6" cy="48.2" r="2.8" fill="#597c33"/><circle cx="159.3" cy="77.0" r="3.3" fill="#728a3c"/><circle cx="86.7" cy="99.9" r="2.3" fill="#222919"/><circle cx="108.1" cy="41.4" r="2.8" fill="#899941"/><circle cx="13.4" cy="39.6" r="2.0" fill="#0e1a18"/><circle cx="146.1" cy="48.8" r="2.7" fill="#40511d"/><circle cx="188.3" cy="27.2" r="1.7" fill="#344b1f"/><circle cx="77.6" cy="36.8" r="3.9" fill="#243317"/><circle cx="86.0" cy="35.6" r="3.0" fill="#132c0c"/><circle cx="128.9" cy="83.3" r="3.3" fill="#557836"/><circle cx="17.5" cy="21.6" r="2.7" fill="#172e07"/><circle cx="166.0" cy="35.4" r="1.7" fill="#789e40"/><circle cx="66.0" cy="29.8" r="1.8" fill="#1c1e15"/><circle cx="43.9" cy="39.3" r="3.5" fill="#162009"/><circle cx="83.2" cy="14.2" r="2.7" fill="#16340e"/><circle cx="186.8" cy="50.9" r="2.4" fill="#3c4c22"/><circle cx="85.8" cy="72.0" r="4.0" fill="#17311c"/><circle cx="151.3" cy="60.6" r="2.7" fill="#40461f"/><circle cx="1.6" cy="25.6" r="3.8" fill="#1b270f"/><circle cx="73.8" cy="52.2" r="3.1" fill="#213313"/><circle cx="172.1" cy="83.5" r="3.6" fill="#567235"/><circle cx="85.1" cy="43.9" r="1.8" fill="#264122"/><circle cx="142.3" cy="88.3" r="3.8" fill="#223925"/><circle cx="167.5" cy="57.0" r="3.0" fill="#345929"/><circle cx="89.1" cy="20.8" r="1.7" fill="#5e7124"/><circle cx="148.5" cy="57.0" r="2.5" fill="#5d7c2f"/><circle cx="94.7" cy="65.4" r="1.8" fill="#1c2516"/><circle cx="103.3" cy="16.0" r="2.2" fill="#516b2f"/><circle cx="6.2" cy="20.0" r="2.6" fill="#1e1e07"/><circle cx="27.5" cy="21.7" r="2.4" fill="#22200a"/><circle cx="152.0" cy="87.1" r="1.9" fill="#344c1d"/><circle cx="35.4" cy="97.8" r="2.8" fill="#344121"/><circle cx="46.6" cy="86.9" r="3.2" fill="#183113"/><circle cx="46.4" cy="64.7" r="2.3" fill="#1b2409"/><circle cx="9.8" cy="19.1" r="3.2" fill="#191f17"/><circle cx="-2.8" cy="62.8" r="3.3" fill="#203516"/><circle cx="108.8" cy="32.4" r="2.4" fill="#4b722a"/><circle cx="28.9" cy="87.2" r="3.2" fill="#1b2b1a"/><circle cx="102.0" cy="51.8" r="3.0" fill="#466232"/><circle cx="111.5" cy="29.3" r="2.9" fill="#899e41"/><circle cx="107.3" cy="51.8" r="2.6" fill="#687a35"/><circle cx="128.0" cy="82.6" r="1.5" fill="#305425"/><circle cx="128.4" cy="79.6" r="3.5" fill="#758740"/><circle cx="129.2" cy="21.5" r="3.3" fill="#586428"/><circle cx="141.8" cy="20.9" r="2.3" fill="#27411a"/><circle cx="65.4" cy="14.6" r="2.8" fill="#252a0f"/><circle cx="110.5" cy="71.9" r="3.0" fill="#7c8b47"/><circle cx="126.0" cy="36.2" r="3.6" fill="#79994a"/><circle cx="79.2" cy="97.0" r="2.7" fill="#1b2f0f"/><circle cx="2.2" cy="15.4" r="3.5" fill="#172d1d"/><circle cx="14.0" cy="85.9" r="1.5" fill="#262b16"/><circle cx="85.3" cy="16.4" r="2.4" fill="#5a782f"/><circle cx="185.7" cy="81.8" r="1.5" fill="#6f9542"/><circle cx="49.1" cy="54.7" r="3.7" fill="#1e1d0b"/><circle cx="91.8" cy="44.3" r="2.0" fill="#1c2f0f"/><circle cx="116.0" cy="47.3" r="3.5" fill="#598132"/><circle cx="61.3" cy="25.5" r="3.3" fill="#5e7c2f"/><circle cx="116.5" cy="38.3" r="4.0" fill="#263b1a"/><circle cx="102.2" cy="56.1" r="3.9" fill="#2b4314"/><circle cx="98.1" cy="87.4" r="3.8" fill="#1b2b07"/><circle cx="85.6" cy="96.2" r="2.3" fill="#29421b"/><circle cx="183.0" cy="64.8" r="3.6" fill="#3f531e"/><circle cx="68.5" cy="48.0" r="1.8" fill="#5e6d2c"/><circle cx="151.6" cy="27.3" r="3.0" fill="#3e4c1c"/><circle cx="73.4" cy="10.2" r="1.5" fill="#172f08"/><circle cx="43.3" cy="48.2" r="2.0" fill="#2b3d1e"/><circle cx="13.2" cy="54.3" r="2.0" fill="#2d3b15"/><circle cx="85.7" cy="86.3" r="2.9" fill="#1c2d18"/><circle cx="157.9" cy="78.6" r="2.1" fill="#3e471e"/><circle cx="116.8" cy="25.3" r="1.5" fill="#809c4e"/><circle cx="83.9" cy="76.9" r="2.7" fill="#5a7132"/><circle cx="59.6" cy="40.7" r="1.7" fill="#172315"/><circle cx="-1.7" cy="48.2" r="2.8" fill="#1d2e1b"/><circle cx="0.4" cy="31.9" r="2.8" fill="#354421"/><circle cx="91.5" cy="25.3" r="2.2" fill="#1b2c0b"/><circle cx="117.9" cy="11.8" r="2.1" fill="#637033"/><circle cx="55.1" cy="72.8" r="3.4" fill="#626932"/><circle cx="10.0" cy="23.3" r="3.4" fill="#202506"/><circle cx="106.4" cy="18.5" r="2.8" fill="#567132"/><circle cx="111.4" cy="46.0" r="3.1" fill="#51682c"/><circle cx="156.3" cy="36.6" r="2.0" fill="#425a23"/><circle cx="103.0" cy="24.8" r="1.8" fill="#7c9846"/><circle cx="113.6" cy="42.9" r="2.1" fill="#8a8c3e"/><circle cx="86.7" cy="50.6" r="1.7" fill="#1e2d17"/><circle cx="152.3" cy="72.5" r="3.9" fill="#768c3c"/><circle cx="37.0" cy="26.8" r="2.1" fill="#1a2306"/><circle cx="50.4" cy="47.6" r="3.9" fill="#15360b"/><circle cx="127.8" cy="79.5" r="3.1" fill="#51733f"/><circle cx="126.3" cy="82.4" r="3.6" fill="#62803c"/><circle cx="40.2" cy="33.3" r="3.3" fill="#353e17"/><circle cx="8.3" cy="58.1" r="3.0" fill="#334519"/><circle cx="10.2" cy="57.1" r="3.9" fill="#172913"/><circle cx="180.4" cy="67.9" r="1.6" fill="#253221"/><circle cx="117.6" cy="85.5" r="2.9" fill="#273212"/><circle cx="102.9" cy="41.9" r="3.4" fill="#576e32"/><circle cx="138.6" cy="40.3" r="3.8" fill="#4d6530"/><circle cx="187.2" cy="74.4" r="3.3" fill="#637b30"/><circle cx="137.5" cy="15.6" r="2.5" fill="#223614"/><circle cx="27.3" cy="66.1" r="2.2" fill="#172a0e"/>
</g>
<rect x="92" y="88" width="6" height="74" fill="#b08458"/>
<rect x="93" y="88" width="2" height="74" fill="#d0a070"/>
<rect x="104" y="98" width="2" height="36" fill="#6a6040"/>
<rect x="158" y="163" width="24" height="24" fill="#8fb400"/>
<path d="M163,184 L163.8,180.4 L174.2,170 L177,172.8 L166.6,183.2 Z M172.8,171.4 L175.6,174.2" fill="none" stroke="#f4f8e8" stroke-width="0.9"/>
</svg>
</body></html>
